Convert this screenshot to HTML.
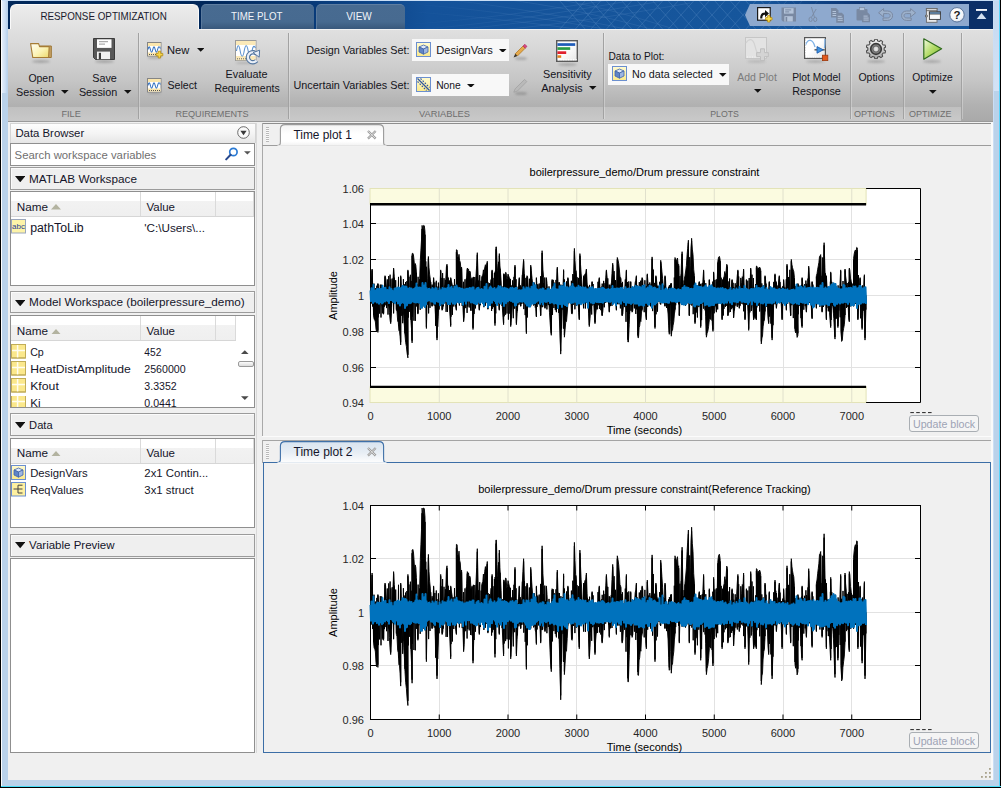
<!DOCTYPE html>
<html><head><meta charset="utf-8"><title>Response Optimization</title>
<style>
*{box-sizing:border-box;margin:0;padding:0}
html,body{width:1001px;height:788px;overflow:hidden;background:#bad2ea;font-family:"Liberation Sans",sans-serif;font-size:12px;color:#000}
#win{position:absolute;left:0;top:0;width:1001px;height:788px;background:#bad2ea;overflow:hidden}
.abs{position:absolute}
#edgeL{left:0;top:0;width:2px;height:788px;background:linear-gradient(90deg,#000 0,#000 1px,#fdfdfd 1px,#fdfdfd 2px)}
#edgeB{left:1px;top:786px;width:1000px;height:2px;background:linear-gradient(180deg,#45dcf6 0,#45dcf6 1px,#000 1px,#000 2px)}
#edgeR{left:999px;top:0;width:2px;height:788px;background:linear-gradient(90deg,#5ad4fa 0,#5ad4fa 1px,#000 1px,#000 2px)}
#edgeR2{left:993px;top:1px;width:1.2px;height:779px;background:#cbdef5}
#edgeT{left:0;top:0;width:1001px;height:1px;background:#c9def5}
#hdr{left:8px;top:1px;width:985px;height:29px;background:linear-gradient(90deg,#00275a 0,#00275a 200px,#0a3f80 330px,#14529a 420px,#16569c 700px,#15549a 960px)}
#hdrR{left:969px;top:1px;width:24px;height:29px;background:#0b2f67}
.tab{position:absolute;top:4px;height:25px;border-radius:5px 5px 0 0;text-align:center;font-size:12px;line-height:25px;color:#eef2f7;background:linear-gradient(180deg,#486b91 0,#476a90 70%,#39587c 100%);border-top:1px solid #5f7ea1;border-left:1px solid #5b7a9d}
#tab1{left:10px;top:4px;width:189px;height:26px;background:linear-gradient(180deg,#ececec,#e0e0e0);color:#1c1c2c;border:1px solid #fafafa;border-bottom:none;border-radius:6px 6px 0 0}
#qa{left:745px;top:4px;width:224px;height:22px;background:#8ea9ce;clip-path:polygon(5px 0,100% 0,100% 100%,5px 100%,0 50%)}
#ribbon{left:8px;top:29px;width:985px;height:93px;background:linear-gradient(180deg,#e0e0e0 0,#d8d8d8 20%,#c5c5c5 56%,#b1b1b1 82%,#a9a9a9 100%)}
#rlabel{left:8px;top:107px;width:953px;height:14px;background:linear-gradient(180deg,#c0c0c0,#c9c9c9)}
#rline{left:8px;top:121px;width:985px;height:1px;background:#9a9a9a}
.sep{position:absolute;top:33px;width:1px;height:86px;background:#a2a2a2;box-shadow:1px 0 0 rgba(255,255,255,.28)}
.slab{position:absolute;top:107px;height:14px;line-height:14px;font-size:11px;color:#6b6b6b;text-align:center}
.t{position:absolute;white-space:nowrap}
.rt{position:absolute;font-size:12px;line-height:14px;color:#111;text-align:center;white-space:nowrap}
.dis{color:#8a8a8a}
.arr{display:inline-block;width:0;height:0;border-left:4px solid transparent;border-right:4px solid transparent;border-top:4px solid #111;vertical-align:middle;margin-left:5px;position:relative;top:-1px}
.combo{position:absolute;background:#f8f8f8;height:22px;font-size:12px;line-height:22px;white-space:nowrap}
#main{left:8px;top:122px;width:985px;height:658px;background:#f0f0f0}
.hd{position:absolute;left:10px;width:245px;background:linear-gradient(180deg,#f6f6f6,#ececec);border:1px solid #9c9c9c;font-size:12.5px;line-height:20px;color:#111;white-space:nowrap}
.tbl{position:absolute;left:10px;width:245px;background:#fff;border:1px solid #8e8e8e}
.th{position:absolute;top:1px;height:24px;background:linear-gradient(180deg,#fff 0,#fff 30%,#f1f1f1 31%,#ededed 100%);border-right:1px solid #d5d5d5;border-bottom:1px solid #d9d9d9;font-size:12.5px;line-height:29px;padding-left:5px;color:#111}
.row{position:absolute;left:0;height:17px;line-height:17px;font-size:12.5px;white-space:nowrap;color:#111}
.ic{position:absolute;left:0;top:0;width:16px;height:16px}
.tri{display:inline-block;width:0;height:0;border-left:5px solid transparent;border-right:5px solid transparent;border-top:6px solid #111;margin:0 5px 1px 4px}
.sorta{display:inline-block;width:0;height:0;border-left:4px solid transparent;border-right:4px solid transparent;border-bottom:5px solid #b1b19e;margin-left:4px;position:relative;top:-1px}
.ptab{position:absolute;height:21px;background:#f3f3f3;border:1px solid #8c9fb8;border-bottom:none;border-radius:5px 5px 0 0;font-size:12.5px;line-height:20px;padding-left:11px;color:#111;white-space:nowrap}
.pframe{position:absolute;left:263px;width:728px;border:1px solid #3a6ea5;background:#f0f0f0}
.ub{position:absolute;left:909px;width:70px;height:17px;border:1px solid #a3a3a3;border-radius:3px;background:#f5f5f5;color:#9b9b9b;font-size:12px;line-height:15px;text-align:center;white-space:nowrap}
.grip{position:absolute;left:257px;width:5px;height:17px;background:repeating-linear-gradient(180deg,#b5b5b5 0,#b5b5b5 1px,transparent 1px,transparent 2px)}
</style></head><body>
<div id="win">
<div class="abs" id="edgeT"></div>
<div class="abs" id="hdr"></div>
<div class="abs" id="hdrR"></div>
<svg class="abs" style="left:400px;top:1px" width="570" height="28" viewBox="0 0 570 28"><defs><linearGradient id="lf" x1="0" y1="0" x2="1" y2="0"><stop offset="0" stop-color="#fff" stop-opacity="0"/><stop offset="0.25" stop-color="#fff" stop-opacity="1"/><stop offset="1" stop-color="#fff" stop-opacity="1"/></linearGradient><mask id="lm"><rect x="0" y="0" width="570" height="28" fill="url(#lf)"/></mask></defs><g mask="url(#lm)" stroke="#4a7fba" stroke-width="0.8" fill="none"><path d="M0,24 C60,20 130,12 215,-2 M0,30 C80,24 150,14 240,-2 M40,30 C110,24 170,16 262,0 M90,30 C150,24 200,18 290,2 M0,10 C60,14 120,20 190,30 M0,2 C80,8 150,18 215,30 M50,-1 C110,6 170,16 235,30 M110,-1 C160,6 200,14 258,30 M160,-1 C200,6 230,14 280,30" opacity="0.38"/><path d="M159.0,-1 L186.0,29 M186.0,-1 L159.0,29 M174.5,-1 L201.5,29 M201.5,-1 L174.5,29 M190.0,-1 L217.0,29 M217.0,-1 L190.0,29 M205.5,-1 L232.5,29 M232.5,-1 L205.5,29 M221.0,-1 L248.0,29 M248.0,-1 L221.0,29 M236.5,-1 L263.5,29 M263.5,-1 L236.5,29 M252.0,-1 L279.0,29 M279.0,-1 L252.0,29 M267.5,-1 L294.5,29 M294.5,-1 L267.5,29 M283.0,-1 L310.0,29 M310.0,-1 L283.0,29 M298.5,-1 L325.5,29 M325.5,-1 L298.5,29 M314.0,-1 L341.0,29 M341.0,-1 L314.0,29 M329.5,-1 L356.5,29 M356.5,-1 L329.5,29 M345.0,-1 L372.0,29 M372.0,-1 L345.0,29 M360.5,-1 L387.5,29 M387.5,-1 L360.5,29 M376.0,-1 L403.0,29 M403.0,-1 L376.0,29 M391.5,-1 L418.5,29 M418.5,-1 L391.5,29" opacity="0.6"/></g></svg>
<div class="tab" id="tab1"></div>
<div class="tab" style="left:201px;width:113px"></div>
<div class="tab" style="left:316px;width:89px"></div>
<div class="abs" style="left:760px;top:1px;width:209px;height:3px;background:linear-gradient(90deg,rgba(8,44,104,0) 0,rgba(8,44,104,.9) 55%,rgba(8,44,104,1) 100%)"></div>
<div class="abs" id="qa"></div>
<svg class="abs" style="left:756.8px;top:7.0px" width="16.5" height="16" viewBox="0 0 16.5 16"><rect x="0.6" y="0.6" width="12.6" height="12.6" fill="#fff" stroke="#1a1a1a" stroke-width="1.2"/><path d="M3.2,11.5 C3.2,7 5,5.4 8,5.4 L8,3 L12,6.6 L8,10.2 L8,7.8 C6,7.8 5.2,9 5.4,11.5 Z" fill="#111"/><path d="M10.6,8.6h2.4v2h2v2.4h-2v2h-2.4v-2h-2v-2.4h2z" fill="#f8dc4c" stroke="#b58c14" stroke-width="0.8"/></svg>
<svg class="abs" style="left:781.3px;top:7.2px" width="15.6" height="15" viewBox="0 0 15.6 15"><path d="M0.5,0.5 H15 V14.5 H2 L0.5,13 Z" fill="#7989a2"/><rect x="3" y="1.2" width="9.6" height="5.4" fill="#b3c3d9"/><rect x="4.2" y="2.4" width="6" height="1" fill="#7989a2"/><rect x="4.2" y="4.4" width="4" height="1" fill="#7989a2"/><rect x="3.4" y="9.2" width="8.4" height="5.3" fill="#b3c3d9"/><rect x="4.6" y="10" width="1.6" height="4.5" fill="#7989a2"/></svg>
<svg class="abs" style="left:807.6px;top:7.0px" width="10" height="15" viewBox="0 0 10 15"><path d="M3.4,0 L6.4,10 M8.2,2 L3.6,10" stroke="#7989a2" stroke-width="0.9" fill="none"/><ellipse cx="2.6" cy="12.4" rx="1.6" ry="2.2" fill="none" stroke="#7989a2" stroke-width="0.9"/><ellipse cx="7.2" cy="12.4" rx="1.6" ry="2.2" fill="none" stroke="#7989a2" stroke-width="0.9"/></svg>
<svg class="abs" style="left:830.8px;top:8.0px" width="13.5" height="15" viewBox="0 0 13.5 15"><path d="M0,0 h5.1 l2.4,2.4 v7.2 h-7.5 z" fill="#7989a2"/><path d="M1.5,3.5 h3.5 M1.5,5.5 h4.5 M1.5,7.5 h4.5" stroke="#b3c3d9" stroke-width="1"/><path d="M5.2,4.8 h5.6 l2.4,2.4 v7.6 h-8 z" fill="#7989a2"/><path d="M6.7,8.3 h4 M6.7,10.3 h5 M6.7,12.3 h5" stroke="#b3c3d9" stroke-width="1"/></svg>
<svg class="abs" style="left:855.6px;top:7.2px" width="14.6" height="15.4" viewBox="0 0 14.6 15.4"><rect x="0.5" y="2" width="11" height="11.5" rx="1" fill="#7989a2"/><rect x="3.4" y="0.4" width="5.2" height="3" fill="#b3c3d9" stroke="#7989a2" stroke-width="0.7"/><path d="M6,5.6 h5.8 l2.4,2.4 v7.2 h-8.2 z" fill="#7989a2"/><path d="M7.5,9.1 h4.2 M7.5,11.1 h5.2 M7.5,13.1 h5.2" stroke="#b3c3d9" stroke-width="1"/></svg>
<svg class="abs" style="left:877.8px;top:8.4px" width="15.2" height="13" viewBox="0 0 15.2 13"><path d="M0.6,4.8 L5.6,0.6 V3 H9.6 C13,3 14.6,5.2 14.6,7.6 C14.6,10.2 12.8,12.4 9.6,12.4 H5 V10 H9.6 C11.4,10 12.2,8.8 12.2,7.6 C12.2,6.4 11.4,5.6 9.6,5.6 H5.6 V9 Z" fill="#9db1cb" stroke="#7989a2" stroke-width="1" stroke-linejoin="round"/></svg>
<svg class="abs" style="left:901px;top:8.4px" width="15.2" height="13" viewBox="0 0 15.2 13"><g transform="translate(15.2,0) scale(-1,1)"><path d="M0.6,4.8 L5.6,0.6 V3 H9.6 C13,3 14.6,5.2 14.6,7.6 C14.6,10.2 12.8,12.4 9.6,12.4 H5 V10 H9.6 C11.4,10 12.2,8.8 12.2,7.6 C12.2,6.4 11.4,5.6 9.6,5.6 H5.6 V9 Z" fill="#9db1cb" stroke="#7989a2" stroke-width="1" stroke-linejoin="round"/></g></svg>
<svg class="abs" style="left:924.6px;top:7.5px" width="16.4" height="15" viewBox="0 0 16.4 15"><rect x="1.4" y="0.5" width="10.6" height="13.8" fill="#e9e9e9" stroke="#6a6a6a" stroke-width="0.9"/><rect x="1.4" y="0.5" width="10.6" height="2.2" fill="#d6d6d6" stroke="#6a6a6a" stroke-width="0.9"/><rect x="4.4" y="4" width="11" height="7.4" fill="#fbfbfb" stroke="#3c3c3c" stroke-width="0.9"/><rect x="4.4" y="4" width="11" height="2" fill="#79b2e8" stroke="#3c3c3c" stroke-width="0.9"/><rect x="0.5" y="7.2" width="2.2" height="1.6" fill="#ddd" stroke="#555" stroke-width="0.6"/></svg>
<svg class="abs" style="left:949.0px;top:7.2px" width="16" height="16" viewBox="0 0 16 16"><defs><radialGradient id="hg" cx="0.4" cy="0.3" r="0.8"><stop offset="0" stop-color="#fff"/><stop offset="0.7" stop-color="#f1f4f8"/><stop offset="1" stop-color="#c9d4e2"/></radialGradient></defs><circle cx="8" cy="7.8" r="7.2" fill="url(#hg)" stroke="#4e6a92" stroke-width="0.9"/><text x="8" y="12" text-anchor="middle" font-family="Liberation Sans, sans-serif" font-weight="bold" font-size="11.5" fill="#1b1b1b">?</text></svg>
<svg class="abs" style="left:976.0px;top:8.7px" width="11" height="10.5" viewBox="0 0 11 10.5"><rect x="0" y="0" width="11" height="1.9" fill="#f4f7fb"/><path d="M0.4,10.3 L5.5,4 L10.6,10.3 Z" fill="#d3e0f0"/></svg>
<div class="abs" id="ribbon"></div>
<div class="abs" style="left:199px;top:29px;width:794px;height:1px;background:#f2f2f2"></div>
<div class="abs" id="rlabel"></div>
<div class="abs" id="rline"></div>


<svg class="abs" style="left:61.4px;top:90.4px" width="7.6" height="3.8" viewBox="0 0 10 5"><path d="M0,0H10L5,5Z" fill="#111"/></svg>


<svg class="abs" style="left:124.1px;top:90.4px" width="7.5" height="3.8" viewBox="0 0 10 5"><path d="M0,0H10L5,5Z" fill="#111"/></svg>

<div class="sep" style="left:138.0px"></div>

<svg class="abs" style="left:196.5px;top:48.2px" width="7.4" height="3.8" viewBox="0 0 10 5"><path d="M0,0H10L5,5Z" fill="#111"/></svg>




<div class="sep" style="left:288.0px"></div>


<div class="combo" style="left:412px;top:39px;width:97px;height:22px"></div>
<div class="combo" style="left:412px;top:74px;width:97px;height:22px"></div>

<svg class="abs" style="left:499.3px;top:48.6px" width="7.5" height="3.8" viewBox="0 0 10 5"><path d="M0,0H10L5,5Z" fill="#111"/></svg>

<svg class="abs" style="left:467.2px;top:83.6px" width="7.6" height="3.8" viewBox="0 0 10 5"><path d="M0,0H10L5,5Z" fill="#111"/></svg>


<svg class="abs" style="left:589.3px;top:85.9px" width="7.5" height="3.8" viewBox="0 0 10 5"><path d="M0,0H10L5,5Z" fill="#111"/></svg>

<div class="sep" style="left:603.0px"></div>

<div class="combo" style="left:608px;top:64px;width:121px;height:21px"></div>

<svg class="abs" style="left:719.3px;top:73.2px" width="7.5" height="3.8" viewBox="0 0 10 5"><path d="M0,0H10L5,5Z" fill="#111"/></svg>

<svg class="abs" style="left:754.3px;top:89.0px" width="7.5" height="3.8" viewBox="0 0 10 5"><path d="M0,0H10L5,5Z" fill="#111"/></svg>



<div class="sep" style="left:849.5px"></div>


<div class="sep" style="left:903.0px"></div>

<svg class="abs" style="left:929.2px;top:89.9px" width="7.6" height="3.8" viewBox="0 0 10 5"><path d="M0,0H10L5,5Z" fill="#111"/></svg>

<div class="sep" style="left:961.0px"></div>
<div class="abs" style="left:32.1px;top:59.7px;width:18.0px;height:3.2px;border-radius:50%;background:rgba(60,60,60,0.28);filter:blur(1.2px)"></div><svg class="abs" style="left:30.1px;top:42.8px" width="22" height="15.5" viewBox="0 0 22 15.5"><defs><linearGradient id="fg" x1="0" y1="0" x2="1" y2="1"><stop offset="0" stop-color="#fffef4"/><stop offset="0.55" stop-color="#fbf3b4"/><stop offset="1" stop-color="#ecd86a"/></linearGradient></defs><path d="M9.5,3 H21.3 V14.5 H4 Z" fill="#c8a468" stroke="#9c7634" stroke-width="1"/><path d="M0.6,0.6 H8.6 L9.6,3.6 H19.2 L18.6,14.6 H2.8 Z" fill="url(#fg)" stroke="#a67c34" stroke-width="1.1" stroke-linejoin="round"/></svg>
<div class="abs" style="left:94.5px;top:59.9px;width:19.0px;height:3.2px;border-radius:50%;background:rgba(60,60,60,0.28);filter:blur(1.2px)"></div><svg class="abs" style="left:93.0px;top:38.0px" width="22" height="22" viewBox="0 0 22 22"><path d="M0.5,0.5 H21.5 V21.5 H2.5 L0.5,19.5 Z" fill="#585858" stroke="#3c3c3c" stroke-width="1"/><rect x="4" y="1.3" width="14.5" height="8.6" fill="#fff"/><rect x="6" y="3.2" width="9" height="1" fill="#9a9a9a"/><rect x="6" y="5.6" width="6" height="1" fill="#9a9a9a"/><rect x="4" y="13.6" width="13" height="7.6" fill="#f2f2f2"/><rect x="5.8" y="14.8" width="2.2" height="6.4" fill="#3c3c3c"/></svg>
<div class="abs" style="left:147.7px;top:56.4px;width:13.0px;height:2.2px;border-radius:50%;background:rgba(60,60,60,0.22);filter:blur(1.2px)"></div><svg class="abs" style="left:147.2px;top:42.2px" width="16.5" height="16.5" viewBox="0 0 16.5 16.5"><rect x="0.5" y="0.5" width="13.5" height="13.5" fill="#fff" stroke="#858585"/><rect x="1" y="1" width="12.5" height="3" fill="#fbe6ac"/><rect x="1" y="10.5" width="12.5" height="3" fill="#fbe6ac"/><path d="M1,7.5 C1.8,4 2.6,4 3.4,7.5 S5,11 5.8,7.5 S7.4,4 8.2,7.5 S9.8,11 10.6,7.5 S12.2,4 13.4,6.5" fill="none" stroke="#2f6fc0" stroke-width="1.1"/><path d="M2,12.5h1m1,0h1m1,0h1m1,0h1m1,0h1m1,0h1" stroke="#555" stroke-width="1"/><path d="M11.2,9.2h2.4v2.2h2.2v2.4h-2.2v2.2h-2.4v-2.2h-2.2v-2.4h2.2z" fill="#f7d646" stroke="#b38a16" stroke-width="0.8"/></svg>
<div class="abs" style="left:147.7px;top:91.7px;width:13.0px;height:2.2px;border-radius:50%;background:rgba(60,60,60,0.22);filter:blur(1.2px)"></div><svg class="abs" style="left:147.2px;top:77.5px" width="16.5" height="16.5" viewBox="0 0 16.5 16.5"><rect x="0.5" y="0.5" width="13.5" height="13.5" fill="#fff" stroke="#858585"/><rect x="1" y="1" width="12.5" height="3" fill="#fbe6ac"/><rect x="1" y="10.5" width="12.5" height="3" fill="#fbe6ac"/><path d="M1,7.5 C1.8,4 2.6,4 3.4,7.5 S5,11 5.8,7.5 S7.4,4 8.2,7.5 S9.8,11 10.6,7.5 S12.2,4 13.4,6.5" fill="none" stroke="#2f6fc0" stroke-width="1.1"/><path d="M2,12.5h1m1,0h1m1,0h1m1,0h1m1,0h1m1,0h1" stroke="#555" stroke-width="1"/></svg>
<div class="abs" style="left:236.2px;top:61.5px;width:18.0px;height:2.8px;border-radius:50%;background:rgba(60,60,60,0.20);filter:blur(1.2px)"></div><svg class="abs" style="left:235.2px;top:40.4px" width="26" height="25" viewBox="0 0 26 25"><rect x="0.5" y="0.5" width="20.5" height="20" fill="#fff" stroke="#9a9a9a"/><rect x="1" y="1" width="19.5" height="4" fill="#fbe9b8"/><rect x="1" y="16" width="19.5" height="4.2" fill="#fbe9b8"/><path d="M1.5,11 C2.6,4 4,4 5.2,11 S8,18 9.2,11 S12,4 13.2,11 S16,16 17,11 S19,5 20.5,8" fill="none" stroke="#5f94d0" stroke-width="1.1"/><path d="M2,18.8h1m1,0h1m1,0h1m1,0h1m1,0h1" stroke="#666" stroke-width="1"/><path d="M21.9,14.3 A5,5 0 1 0 21.6,20.6" fill="none" stroke="#54769f" stroke-width="4.4" stroke-linecap="butt"/><path d="M21.9,14.3 A5,5 0 1 0 21.6,20.6" fill="none" stroke="#e9eff8" stroke-width="2.2"/><path d="M18,12.6 L24.6,10.2 L24.2,17.2 Z" fill="#e9eff8" stroke="#54769f" stroke-width="1"/></svg>
<svg class="abs" style="left:416.0px;top:42.0px" width="15" height="15" viewBox="0 0 15 15"><defs><linearGradient id="yg4202" x1="0" y1="0" x2="0" y2="1"><stop offset="0" stop-color="#fffbd2"/><stop offset="1" stop-color="#fbe989"/></linearGradient></defs><rect x="0.5" y="0.5" width="14" height="14" fill="url(#yg4202)" stroke="#6b8fcf"/><path d="M3,5 L7.5,3 L12,5 L7.5,7 Z" fill="#dfe8f7" stroke="#3f63a8" stroke-width="0.8" stroke-linejoin="round"/><path d="M3,5 V10 L7.5,12.2 V7 Z" fill="#5f84c6" stroke="#3f63a8" stroke-width="0.8" stroke-linejoin="round"/><path d="M12,5 V10 L7.5,12.2 V7 Z" fill="#9db6e2" stroke="#3f63a8" stroke-width="0.8" stroke-linejoin="round"/></svg>
<svg class="abs" style="left:416.0px;top:77.0px" width="15" height="15" viewBox="0 0 15 15"><defs><linearGradient id="yp" x1="0" y1="0" x2="0" y2="1"><stop offset="0" stop-color="#fffbd2"/><stop offset="1" stop-color="#fbe989"/></linearGradient></defs><rect x="0.5" y="0.5" width="14" height="14" fill="url(#yp)" stroke="#6b8fcf"/><path d="M1.5,1.5 L13.5,13.5" stroke="#2f55a0" stroke-width="1.2"/><path d="M4.5,1.5 L13.5,10.5 M1.5,4.5 L10.5,13.5" stroke="#2f55a0" stroke-width="1.1" stroke-dasharray="1.6,1.4"/></svg>
<div class="abs" style="left:514.8px;top:57.4px;width:12.0px;height:2.4px;border-radius:50%;background:rgba(60,60,60,0.25);filter:blur(1.2px)"></div><svg class="abs" style="left:512.8px;top:43.4px" width="15" height="15" viewBox="0 0 15 15"><path d="M2.2,10.8 L10,3 L12.2,5.2 L4.4,13 Z" fill="#e6a94a" stroke="#b07a28" stroke-width="0.8"/><path d="M10,3 L11.8,1.2 L14,3.4 L12.2,5.2 Z" fill="#d8457e" stroke="#a82a5c" stroke-width="0.6"/><path d="M0.6,14.4 L2.2,10.8 L4.4,13 Z" fill="#3a3226"/></svg>
<div class="abs" style="left:514.8px;top:92.4px;width:12.0px;height:2.4px;border-radius:50%;background:rgba(60,60,60,0.25);filter:blur(1.2px)"></div><svg class="abs" style="left:512.8px;top:78.4px" width="15" height="15" viewBox="0 0 15 15"><path d="M0.8,14.2 L2.2,10.8 L11.6,1.4 L13.8,3.6 L4.4,13 Z" fill="#b9b9b9" stroke="#a2a2a2" stroke-width="0.8"/></svg>
<div class="abs" style="left:557.5px;top:62.5px;width:19.0px;height:3.0px;border-radius:50%;background:rgba(60,60,60,0.25);filter:blur(1.2px)"></div><svg class="abs" style="left:556.0px;top:40.0px" width="22" height="22" viewBox="0 0 22 22"><defs><linearGradient id="sg" x1="0" y1="0" x2="1" y2="1"><stop offset="0.4" stop-color="#fff"/><stop offset="1" stop-color="#e6e6e6"/></linearGradient></defs><rect x="0.7" y="0.7" width="20.6" height="20.6" fill="url(#sg)" stroke="#5a5a5a" stroke-width="1.4"/><rect x="1.4" y="3.2" width="17.8" height="2.7" fill="#1f5cb8"/><rect x="1.4" y="7.2" width="12.8" height="2.7" fill="#2b9b45"/><rect x="1.4" y="11.3" width="8.8" height="2.7" fill="#e0202e"/><rect x="1.4" y="15.3" width="3.8" height="2.5" fill="#e2811c"/><path d="M2,19.6h1.2m1.3,0h1.2m1.3,0h1.2m1.3,0h1.2m1.3,0h1.2m1.3,0h1.2m1.3,0h1.2m1.3,0h1.2" stroke="#fff" stroke-width="1.4"/></svg>
<svg class="abs" style="left:612.0px;top:66.0px" width="15" height="15" viewBox="0 0 15 15"><defs><linearGradient id="yg6186" x1="0" y1="0" x2="0" y2="1"><stop offset="0" stop-color="#fffbd2"/><stop offset="1" stop-color="#fbe989"/></linearGradient></defs><rect x="0.5" y="0.5" width="14" height="14" fill="url(#yg6186)" stroke="#6b8fcf"/><path d="M3,5 L7.5,3 L12,5 L7.5,7 Z" fill="#dfe8f7" stroke="#3f63a8" stroke-width="0.8" stroke-linejoin="round"/><path d="M3,5 V10 L7.5,12.2 V7 Z" fill="#5f84c6" stroke="#3f63a8" stroke-width="0.8" stroke-linejoin="round"/><path d="M12,5 V10 L7.5,12.2 V7 Z" fill="#9db6e2" stroke="#3f63a8" stroke-width="0.8" stroke-linejoin="round"/></svg>
<div class="abs" style="left:746.5px;top:60.0px;width:19.0px;height:3.0px;border-radius:50%;background:rgba(60,60,60,0.15);filter:blur(1.2px)"></div><svg class="abs" style="left:745.0px;top:37.0px" width="24" height="24" viewBox="0 0 24 24"><rect x="0.5" y="0.5" width="21" height="21" fill="#e3e3e3" stroke="#c6c6c6"/><path d="M1,6 C4,1 8,1 10,9 S13,17 15,17" fill="none" stroke="#d2d2d2" stroke-width="1.2"/><path d="M2,20h1m1.5,0h1m1.5,0h1m1.5,0h1" stroke="#f4f4f4" stroke-width="1.2"/><path d="M15.5,11.8h4v3.8h3.9v4h-3.9v3.9h-4v-3.9h-3.9v-4h3.9z" fill="#d4d4d4" stroke="#bcbcbc" stroke-width="0.9"/></svg>
<div class="abs" style="left:805.5px;top:60.0px;width:19.0px;height:3.0px;border-radius:50%;background:rgba(60,60,60,0.22);filter:blur(1.2px)"></div><svg class="abs" style="left:804.0px;top:37.0px" width="25" height="25" viewBox="0 0 25 25"><defs><linearGradient id="pg" x1="0" y1="0" x2="1" y2="1"><stop offset="0.45" stop-color="#fff"/><stop offset="1" stop-color="#e2e2e2"/></linearGradient></defs><rect x="0.6" y="0.6" width="20.8" height="20.8" fill="url(#pg)" stroke="#565656" stroke-width="1.2"/><path d="M1.5,8 C4,1 9,2 11,10 M20.5,11 C21,8 21,5 21,2" fill="none" stroke="#7fb2e6" stroke-width="1.3"/><path d="M2,19.8h1m1.3,0h1m1.3,0h1m1.3,0h1m1.3,0h1m1.3,0h1m1.3,0h1 M1.6,4v1m0,1.5v1m0,1.5v1m0,1.5v1m0,1.5v1m0,1.5v1" stroke="#fff" stroke-width="1.2"/><path d="M10.5,12.8 H20.8" stroke="#666" stroke-width="1.6"/><path d="M13,9.6 L19.2,12.8 L13,16.2 Z" fill="#3f92e0" stroke="#1f5fae" stroke-width="0.9" stroke-linejoin="round"/><rect x="18.4" y="18.2" width="5.4" height="5.4" fill="#e25a1c" stroke="#9e3a10" stroke-width="0.8"/></svg>
<div class="abs" style="left:867.0px;top:60.2px;width:18.0px;height:3.2px;border-radius:50%;background:rgba(60,60,60,0.25);filter:blur(1.2px)"></div><svg class="abs" style="left:866.0px;top:38.8px" width="20" height="20" viewBox="0 0 20 20"><defs><linearGradient id="gg" x1="0" y1="0" x2="0" y2="1"><stop offset="0" stop-color="#f6f6f6"/><stop offset="1" stop-color="#a8a8a8"/></linearGradient></defs><polygon points="18.15,10.93 19.69,12.01 19.02,14.07 17.14,14.03 16.04,15.54 16.66,17.32 14.90,18.60 13.41,17.46 11.63,18.04 11.09,19.84 8.91,19.84 8.37,18.04 6.59,17.46 5.10,18.60 3.34,17.32 3.96,15.54 2.86,14.03 0.98,14.07 0.31,12.01 1.85,10.93 1.85,9.07 0.31,7.99 0.98,5.93 2.86,5.97 3.96,4.46 3.34,2.68 5.10,1.40 6.59,2.54 8.37,1.96 8.91,0.16 11.09,0.16 11.63,1.96 13.41,2.54 14.90,1.40 16.66,2.68 16.04,4.46 17.14,5.97 19.02,5.93 19.69,7.99 18.15,9.07" fill="url(#gg)" stroke="#4c4c4c" stroke-width="1.1" stroke-linejoin="round"/><circle cx="10" cy="10" r="5.3" fill="#8a8a8a" stroke="#3a3a3a" stroke-width="1.7"/><circle cx="10" cy="10" r="3.2" fill="#b9b9b9" stroke="#555" stroke-width="0.9"/><circle cx="10" cy="10" r="1.9" fill="#e4e4e4"/></svg>
<div class="abs" style="left:923.1px;top:59.9px;width:18.0px;height:3.2px;border-radius:50%;background:rgba(60,60,60,0.25);filter:blur(1.2px)"></div><svg class="abs" style="left:922.6px;top:38.0px" width="20" height="22" viewBox="0 0 20 22"><defs><linearGradient id="plg" x1="0" y1="0" x2="1" y2="0.9"><stop offset="0" stop-color="#f4fbe4"/><stop offset="0.5" stop-color="#b5dc6a"/><stop offset="1" stop-color="#7dbb2e"/></linearGradient></defs><path d="M0.8,0.8 L18.6,10.8 L0.8,21.2 Z" fill="url(#plg)" stroke="#2f6a1c" stroke-width="1.2" stroke-linejoin="round"/></svg>
<div class="abs" id="main"></div>
<div class="abs" style="left:10px;top:123px;width:246px;height:20px;background:linear-gradient(180deg,#fdfdfd 0,#f4f4f4 50%,#e6e6e6 100%);border:1px solid #d4d4d4;border-bottom:none"></div>
<svg class="abs" style="left:236.5px;top:125.5px" width="13" height="13" viewBox="0 0 13 13"><circle cx="6.5" cy="6.5" r="5.8" fill="#fafafa" stroke="#5a5a5a" stroke-width="0.9"/><path d="M3.4,4.8 H9.6 L6.5,9.2 Z" fill="#3a3a3a"/></svg>
<div class="abs" style="left:10px;top:142.6px;width:245px;height:23px;background:#fff;border:1px solid #8f8f8f"></div>
<svg class="abs" style="left:224.5px;top:146.5px" width="14" height="14" viewBox="0 0 14 14"><circle cx="8.4" cy="5" r="3.7" fill="#fff" stroke="#2a7ad4" stroke-width="1.7"/><path d="M5.6,7.8 L1.2,12.4" stroke="#27488e" stroke-width="2" stroke-linecap="round"/></svg>
<svg class="abs" style="left:244.0px;top:151.0px" width="6.8" height="3.8" viewBox="0 0 10 5"><path d="M0,0H10L5,5Z" fill="#555"/></svg>
<div class="abs" style="left:10px;top:167.2px;width:244.5px;height:22.4px;background:#efefef;border:1px solid #9b9b9b;box-shadow:inset 1px 1px 0 #fbfbfb"></div>
<svg class="abs" style="left:14.6px;top:175.9px" width="10.4" height="6.4" viewBox="0 0 10 6"><path d="M0,0H10L5,6Z" fill="#111"/></svg>
<div class="abs" style="left:10px;top:191.0px;width:245px;height:94.6px;background:#fff;border:1px solid #8f8f8f;overflow:hidden"></div>
<div class="abs" style="left:11px;top:192.0px;width:242.5px;height:25px;background:linear-gradient(180deg,#fff 0,#fff 36%,#f2f2f2 37%,#efefef 100%);border-bottom:1px solid #d6d6d6"></div>
<div class="abs" style="left:140.0px;top:192.0px;width:1px;height:24px;background:#dadada"></div>
<div class="abs" style="left:214.6px;top:192.0px;width:1px;height:24px;background:#dadada"></div>
<div class="abs" style="left:252.5px;top:192.0px;width:1px;height:24px;background:#dadada"></div>
<svg class="abs" style="left:51.2px;top:204.2px" width="10" height="5.6" viewBox="0 0 10 5.6"><path d="M0,5.6H10L5,0Z" fill="#b3b3a0"/></svg>
<svg class="abs" style="left:11.3px;top:219.3px" width="15" height="15" viewBox="0 0 15 15"><rect x="0.5" y="0.5" width="14" height="13.5" fill="#fdf3a8" stroke="#9aa6bc"/><text x="7.5" y="10.4" text-anchor="middle" font-family="Liberation Sans, sans-serif" font-size="8" fill="#2a3f94">abc</text></svg>
<div class="abs" style="left:10px;top:290.8px;width:244.5px;height:22.5px;background:#efefef;border:1px solid #9b9b9b;box-shadow:inset 1px 1px 0 #fbfbfb"></div>
<svg class="abs" style="left:14.6px;top:299.5px" width="10.4" height="6.4" viewBox="0 0 10 6"><path d="M0,0H10L5,6Z" fill="#111"/></svg>
<div class="abs" style="left:10px;top:315.4px;width:245px;height:92.2px;background:#fff;border:1px solid #8f8f8f;overflow:hidden"></div>
<div class="abs" style="left:11px;top:316.4px;width:224.5px;height:25px;background:linear-gradient(180deg,#fff 0,#fff 36%,#f2f2f2 37%,#efefef 100%);border-bottom:1px solid #d6d6d6"></div>
<div class="abs" style="left:140.0px;top:316.4px;width:1px;height:24px;background:#dadada"></div>
<div class="abs" style="left:214.6px;top:316.4px;width:1px;height:24px;background:#dadada"></div>
<div class="abs" style="left:234.5px;top:316.4px;width:1px;height:24px;background:#dadada"></div>
<svg class="abs" style="left:51.2px;top:328.6px" width="10" height="5.6" viewBox="0 0 10 5.6"><path d="M0,5.6H10L5,0Z" fill="#b3b3a0"/></svg>
<div class="abs" style="left:11px;top:342px;width:226px;height:64.6px;overflow:hidden" id="mwclip"></div>
<svg class="abs" style="left:11.3px;top:343.5px" width="15" height="15" viewBox="0 0 15 15"><rect x="0.5" y="0.5" width="14" height="13.5" fill="#fbe88c" stroke="#b9a550"/><path d="M6.6,0.5V14M0.5,6.6H14.5" stroke="#fffdf0" stroke-width="1.5"/><path d="M0.5,0.5H14.5V14H0.5Z" fill="none" stroke="#c1ad58"/></svg>
<svg class="abs" style="left:11.3px;top:360.5px" width="15" height="15" viewBox="0 0 15 15"><rect x="0.5" y="0.5" width="14" height="13.5" fill="#fbe88c" stroke="#b9a550"/><path d="M6.6,0.5V14M0.5,6.6H14.5" stroke="#fffdf0" stroke-width="1.5"/><path d="M0.5,0.5H14.5V14H0.5Z" fill="none" stroke="#c1ad58"/></svg>
<svg class="abs" style="left:11.3px;top:377.5px" width="15" height="15" viewBox="0 0 15 15"><rect x="0.5" y="0.5" width="14" height="13.5" fill="#fbe88c" stroke="#b9a550"/><path d="M6.6,0.5V14M0.5,6.6H14.5" stroke="#fffdf0" stroke-width="1.5"/><path d="M0.5,0.5H14.5V14H0.5Z" fill="none" stroke="#c1ad58"/></svg>
<div class="abs" style="left:11px;top:396px;width:226px;height:11px;overflow:hidden"><svg class="abs" style="left:0.3px;top:-1.4px" width="15" height="15" viewBox="0 0 15 15"><rect x="0.5" y="0.5" width="14" height="13.5" fill="#fbe88c" stroke="#b9a550"/><path d="M6.6,0.5V14M0.5,6.6H14.5" stroke="#fffdf0" stroke-width="1.5"/><path d="M0.5,0.5H14.5V14H0.5Z" fill="none" stroke="#c1ad58"/></svg><svg class="abs" style="left:0;top:0" width="226" height="11" font-family="Liberation Sans, sans-serif"><text x="19.2" y="10.8" font-size="11.6" fill="#15152a">Ki</text><text x="133.3" y="10.8" font-size="11.6" fill="#15152a" textLength="32.4" lengthAdjust="spacingAndGlyphs">0.0441</text></svg></div>
<div class="abs" style="left:236.5px;top:342px;width:17.5px;height:65px;background:#fff"></div>
<svg class="abs" style="left:241.4px;top:349.6px" width="7.6" height="4.2" viewBox="0 0 10 5"><path d="M0,5H10L5,0Z" fill="#4a4a4a"/></svg>
<svg class="abs" style="left:241.4px;top:396.4px" width="7.6" height="4.2" viewBox="0 0 10 5"><path d="M0,0H10L5,5Z" fill="#4a4a4a"/></svg>
<div class="abs" style="left:238px;top:361px;width:15.6px;height:6px;background:linear-gradient(180deg,#fcfcfc,#dcdcdc);border:1px solid #9a9a9a;border-radius:2px"></div>
<div class="abs" style="left:10px;top:413.0px;width:244.5px;height:22.6px;background:#efefef;border:1px solid #9b9b9b;box-shadow:inset 1px 1px 0 #fbfbfb"></div>
<svg class="abs" style="left:14.6px;top:421.7px" width="10.4" height="6.4" viewBox="0 0 10 6"><path d="M0,0H10L5,6Z" fill="#111"/></svg>
<div class="abs" style="left:10px;top:437.6px;width:245px;height:90.8px;background:#fff;border:1px solid #8f8f8f;overflow:hidden"></div>
<div class="abs" style="left:11px;top:438.6px;width:242.5px;height:25px;background:linear-gradient(180deg,#fff 0,#fff 36%,#f2f2f2 37%,#efefef 100%);border-bottom:1px solid #d6d6d6"></div>
<div class="abs" style="left:140.0px;top:438.6px;width:1px;height:24px;background:#dadada"></div>
<div class="abs" style="left:214.6px;top:438.6px;width:1px;height:24px;background:#dadada"></div>
<div class="abs" style="left:252.5px;top:438.6px;width:1px;height:24px;background:#dadada"></div>
<svg class="abs" style="left:51.2px;top:450.8px" width="10" height="5.6" viewBox="0 0 10 5.6"><path d="M0,5.6H10L5,0Z" fill="#b3b3a0"/></svg>
<svg class="abs" style="left:11.3px;top:464.7px" width="15" height="15" viewBox="0 0 15 15"><defs><linearGradient id="yg577" x1="0" y1="0" x2="0" y2="1"><stop offset="0" stop-color="#fffbd2"/><stop offset="1" stop-color="#fbe989"/></linearGradient></defs><rect x="0.5" y="0.5" width="14" height="14" fill="url(#yg577)" stroke="#6b8fcf"/><path d="M3,5 L7.5,3 L12,5 L7.5,7 Z" fill="#dfe8f7" stroke="#3f63a8" stroke-width="0.8" stroke-linejoin="round"/><path d="M3,5 V10 L7.5,12.2 V7 Z" fill="#5f84c6" stroke="#3f63a8" stroke-width="0.8" stroke-linejoin="round"/><path d="M12,5 V10 L7.5,12.2 V7 Z" fill="#9db6e2" stroke="#3f63a8" stroke-width="0.8" stroke-linejoin="round"/></svg>
<svg class="abs" style="left:11.3px;top:482.0px" width="15" height="15" viewBox="0 0 15 15"><rect x="0.5" y="0.5" width="14" height="13.5" fill="#fdf0a0" stroke="#6b8fcf"/><path d="M2.5,7H7 M7,3.2V11 M7,3.2H11.5 M7,7H11.5 M7,11H11.5" stroke="#444" stroke-width="1" fill="none"/></svg>
<div class="abs" style="left:10px;top:533.6px;width:244.5px;height:23.4px;background:#efefef;border:1px solid #9b9b9b;box-shadow:inset 1px 1px 0 #fbfbfb"></div>
<svg class="abs" style="left:14.6px;top:542.3px" width="10.4" height="6.4" viewBox="0 0 10 6"><path d="M0,0H10L5,6Z" fill="#111"/></svg>
<div class="abs" style="left:10px;top:558px;width:245px;height:195px;background:#fff;border:1px solid #8f8f8f"></div>
<div class="abs" style="left:255.5px;top:123px;width:1px;height:630px;background:#d9d9d9"></div>
<div class="abs" style="left:262px;top:123px;width:729px;height:1px;background:#8e8e8e"></div>
<div class="abs" style="left:262px;top:123px;width:1px;height:314px;background:#a9a9a9"></div>
<div class="abs" style="left:262px;top:144.6px;width:729px;height:1.2px;background:#9c9c9c"></div>
<div class="abs" style="left:262px;top:436px;width:729px;height:1.2px;background:#fbfbfb"></div>
<div class="abs" style="left:991px;top:122px;width:2px;height:658px;background:#fafafa"></div>
<div class="abs" style="left:262px;top:440px;width:729px;height:1px;background:#a4a4a4"></div>
<div class="abs" style="left:262px;top:440px;width:1px;height:23px;background:#a9a9a9"></div>
<div class="abs" style="left:262.6px;top:462px;width:728.4px;height:291px;border:1.2px solid #3c6ea6"></div>
<svg class="abs" style="left:277px;top:124.2px" width="111" height="23" viewBox="0 0 111 23"><defs><linearGradient id="tga" x1="0" y1="0" x2="0" y2="1"><stop offset="0" stop-color="#d9e4ef"/><stop offset="0.5" stop-color="#e6edf4"/><stop offset="1" stop-color="#fdfdfd"/></linearGradient><linearGradient id="tgi" x1="0" y1="0" x2="0" y2="1"><stop offset="0" stop-color="#f3f3f3"/><stop offset="0.45" stop-color="#fff"/><stop offset="0.8" stop-color="#fff"/><stop offset="1" stop-color="#f2f2f2"/></linearGradient></defs><path d="M0,21.5 C3,21.5 3.4,20.5 3.4,17.5 V5 C3.4,2 5,0.6 8,0.6 H102 C105,0.6 106.6,2 106.6,5 V17.5 C106.6,20.5 107,21.5 110,21.5" fill="url(#tgi)" stroke="#9a9a9a" stroke-width="1.1"/><path d="M0.5,21.9 H109.5" stroke="#f1f1f1" stroke-width="1.4"/></svg>
<div class="abs" style="left:266px;top:126.8px;width:3.2px;height:15px;background:repeating-linear-gradient(180deg,#b9b9b9 0,#b9b9b9 1px,rgba(255,255,255,.6) 1px,rgba(255,255,255,.6) 2px)"></div>
<svg class="abs" style="left:367.4px;top:130.4px" width="9.6" height="9.6" viewBox="0 0 10 10"><path d="M1,1L9,9M9,1L1,9" stroke="#9d9d9d" stroke-width="2.4"/><path d="M1.3,1.3L8.7,8.7M8.700,1.3L1.3,8.7" stroke="#f4f4f4" stroke-width="0.7"/></svg>
<svg class="abs" style="left:277px;top:441.0px" width="111" height="23" viewBox="0 0 111 23"><defs><linearGradient id="tga" x1="0" y1="0" x2="0" y2="1"><stop offset="0" stop-color="#d9e4ef"/><stop offset="0.5" stop-color="#e6edf4"/><stop offset="1" stop-color="#fdfdfd"/></linearGradient><linearGradient id="tgi" x1="0" y1="0" x2="0" y2="1"><stop offset="0" stop-color="#f3f3f3"/><stop offset="0.45" stop-color="#fff"/><stop offset="0.8" stop-color="#fff"/><stop offset="1" stop-color="#f2f2f2"/></linearGradient></defs><path d="M0,21.5 C3,21.5 3.4,20.5 3.4,17.5 V5 C3.4,2 5,0.6 8,0.6 H102 C105,0.6 106.6,2 106.6,5 V17.5 C106.6,20.5 107,21.5 110,21.5" fill="url(#tga)" stroke="#3f70a8" stroke-width="1.1"/><path d="M0.5,21.9 H109.5" stroke="#fdfdfd" stroke-width="1.4"/></svg>
<div class="abs" style="left:266px;top:443.6px;width:3.2px;height:15px;background:repeating-linear-gradient(180deg,#b9b9b9 0,#b9b9b9 1px,rgba(255,255,255,.6) 1px,rgba(255,255,255,.6) 2px)"></div>
<svg class="abs" style="left:367.4px;top:447.2px" width="9.6" height="9.6" viewBox="0 0 10 10"><path d="M1,1L9,9M9,1L1,9" stroke="#9d9d9d" stroke-width="2.4"/><path d="M1.3,1.3L8.7,8.7M8.700,1.3L1.3,8.7" stroke="#f4f4f4" stroke-width="0.7"/></svg>
<div class="abs" style="left:909px;top:415.2px;width:70px;height:16.6px;border:1px solid #a9aeb3;border-radius:3px;background:#f4f4f4"></div>
<div class="abs" style="left:909px;top:732.2px;width:70px;height:16.6px;border:1px solid #a9aeb3;border-radius:3px;background:#f4f4f4"></div>
<svg class="abs" style="left:980.6px;top:768px" width="11" height="11" viewBox="0 0 11 11"><rect x="8" y="0" width="1.8" height="1.8" fill="#a9a28c"/><rect x="4" y="4" width="1.8" height="1.8" fill="#a9a28c"/><rect x="8" y="4" width="1.8" height="1.8" fill="#a9a28c"/><rect x="0" y="8" width="1.8" height="1.8" fill="#a9a28c"/><rect x="4" y="8" width="1.8" height="1.8" fill="#a9a28c"/><rect x="8" y="8" width="1.8" height="1.8" fill="#a9a28c"/></svg>
<svg class="abs" style="left:0;top:0" width="1001" height="788" viewBox="0 0 1001 788">
<rect x="370.5" y="188.5" width="550.0" height="214.0" fill="#fff"/>
<line x1="439.50" y1="188.5" x2="439.50" y2="402.5" stroke="#e2e2e2" stroke-width="1"/>
<line x1="508.50" y1="188.5" x2="508.50" y2="402.5" stroke="#e2e2e2" stroke-width="1"/>
<line x1="576.50" y1="188.5" x2="576.50" y2="402.5" stroke="#e2e2e2" stroke-width="1"/>
<line x1="645.50" y1="188.5" x2="645.50" y2="402.5" stroke="#e2e2e2" stroke-width="1"/>
<line x1="714.50" y1="188.5" x2="714.50" y2="402.5" stroke="#e2e2e2" stroke-width="1"/>
<line x1="783.50" y1="188.5" x2="783.50" y2="402.5" stroke="#e2e2e2" stroke-width="1"/>
<line x1="851.50" y1="188.5" x2="851.50" y2="402.5" stroke="#e2e2e2" stroke-width="1"/>
<line x1="370.5" y1="223.5" x2="920.5" y2="223.5" stroke="#e2e2e2" stroke-width="1"/>
<line x1="370.5" y1="259.5" x2="920.5" y2="259.5" stroke="#e2e2e2" stroke-width="1"/>
<line x1="370.5" y1="295.5" x2="920.5" y2="295.5" stroke="#e2e2e2" stroke-width="1"/>
<line x1="370.5" y1="331.5" x2="920.5" y2="331.5" stroke="#e2e2e2" stroke-width="1"/>
<line x1="370.5" y1="367.5" x2="920.5" y2="367.5" stroke="#e2e2e2" stroke-width="1"/>
<rect x="370.0" y="188.5" width="496.1" height="15.7" fill="#fbfbe0" stroke="#e3e3b8" stroke-width="1"/>
<rect x="370.0" y="386.9" width="496.1" height="15.6" fill="#fbfbe0" stroke="#e3e3b8" stroke-width="1"/>
<line x1="439.25" y1="188.5" x2="439.25" y2="204.2" stroke="#e0e0cc" stroke-width="1"/>
<line x1="439.25" y1="386.9" x2="439.25" y2="402.5" stroke="#e0e0cc" stroke-width="1"/>
<line x1="508.00" y1="188.5" x2="508.00" y2="204.2" stroke="#e0e0cc" stroke-width="1"/>
<line x1="508.00" y1="386.9" x2="508.00" y2="402.5" stroke="#e0e0cc" stroke-width="1"/>
<line x1="576.75" y1="188.5" x2="576.75" y2="204.2" stroke="#e0e0cc" stroke-width="1"/>
<line x1="576.75" y1="386.9" x2="576.75" y2="402.5" stroke="#e0e0cc" stroke-width="1"/>
<line x1="645.50" y1="188.5" x2="645.50" y2="204.2" stroke="#e0e0cc" stroke-width="1"/>
<line x1="645.50" y1="386.9" x2="645.50" y2="402.5" stroke="#e0e0cc" stroke-width="1"/>
<line x1="714.25" y1="188.5" x2="714.25" y2="204.2" stroke="#e0e0cc" stroke-width="1"/>
<line x1="714.25" y1="386.9" x2="714.25" y2="402.5" stroke="#e0e0cc" stroke-width="1"/>
<line x1="783.00" y1="188.5" x2="783.00" y2="204.2" stroke="#e0e0cc" stroke-width="1"/>
<line x1="783.00" y1="386.9" x2="783.00" y2="402.5" stroke="#e0e0cc" stroke-width="1"/>
<line x1="851.75" y1="188.5" x2="851.75" y2="204.2" stroke="#e0e0cc" stroke-width="1"/>
<line x1="851.75" y1="386.9" x2="851.75" y2="402.5" stroke="#e0e0cc" stroke-width="1"/>
<path d="M370.5,204.2 V386.9" stroke="#000" stroke-width="1" fill="none"/>
<path d="M866.1,188.5 H920.5 V402.5 H866.1" stroke="#000" stroke-width="1" fill="none"/>
<line x1="370.5" y1="223.5" x2="376.0" y2="223.5" stroke="#000"/>
<line x1="920.5" y1="223.5" x2="915.0" y2="223.5" stroke="#000"/>
<line x1="370.5" y1="259.5" x2="376.0" y2="259.5" stroke="#000"/>
<line x1="920.5" y1="259.5" x2="915.0" y2="259.5" stroke="#000"/>
<line x1="370.5" y1="295.5" x2="376.0" y2="295.5" stroke="#000"/>
<line x1="920.5" y1="295.5" x2="915.0" y2="295.5" stroke="#000"/>
<line x1="370.5" y1="331.5" x2="376.0" y2="331.5" stroke="#000"/>
<line x1="920.5" y1="331.5" x2="915.0" y2="331.5" stroke="#000"/>
<line x1="370.5" y1="367.5" x2="376.0" y2="367.5" stroke="#000"/>
<line x1="920.5" y1="367.5" x2="915.0" y2="367.5" stroke="#000"/>
<path d="M370.5,291.9L371.3,282.7L372.1,269.0L372.9,292.1L373.6,316.0L374.2,319.5L374.8,319.8L375.4,322.0L376.0,329.1L376.6,331.9L377.2,327.1L377.9,332.4L377.9,283.4L378.5,288.9L379.1,292.5L379.8,289.4L380.4,297.3L381.0,297.6L381.7,304.1L382.3,306.1L382.9,313.7L383.6,314.1L384.3,293.8L385.0,275.7L385.6,277.9L386.3,286.2L386.9,289.6L387.5,295.6L388.2,306.1L388.8,305.5L389.4,312.3L390.1,320.1L390.7,323.7L391.4,313.8L392.1,292.7L392.9,282.2L393.6,268.0L394.3,276.7L395.0,285.9L395.7,297.9L396.4,310.3L397.0,311.6L397.7,321.1L398.3,322.5L398.9,330.5L399.5,331.2L400.1,336.7L400.7,344.9L400.7,275.7L401.3,287.7L401.9,295.9L402.6,303.7L403.2,305.7L403.8,318.8L404.4,325.7L405.0,335.3L405.7,342.6L406.4,346.5L407.1,353.2L407.9,357.9L407.9,269.9L408.5,281.7L409.1,290.1L409.7,300.5L410.3,308.2L410.9,320.5L411.5,328.8L412.1,342.9L412.1,253.6L412.8,253.2L413.4,254.6L414.0,260.0L414.6,266.9L415.2,263.5L415.8,265.3L416.4,271.9L417.1,289.5L417.9,314.1L418.5,300.8L419.1,286.9L419.7,278.6L420.3,260.6L420.9,250.1L421.5,239.9L422.1,225.4L422.9,230.7L423.6,225.4L424.3,225.8L425.0,231.5L425.7,283.6L426.4,328.5L427.1,301.9L427.8,281.3L428.4,256.5L429.0,267.8L429.7,274.9L430.3,279.2L430.9,286.6L431.5,302.0L432.1,306.4L432.9,291.0L433.6,277.6L434.3,294.0L434.9,300.7L435.6,316.5L436.3,324.3L437.0,340.1L437.6,324.2L438.2,316.6L438.9,300.7L439.5,295.0L440.1,285.3L440.7,269.9L441.4,289.3L442.1,310.3L442.8,308.6L443.4,301.4L444.0,293.8L444.6,286.3L445.2,284.4L445.8,279.6L446.4,266.8L447.0,264.2L447.6,276.2L448.2,281.0L448.9,292.0L449.5,306.9L450.1,316.5L450.7,326.6L450.7,277.6L451.3,281.1L452.0,283.6L452.6,287.7L453.3,291.6L453.9,294.7L454.5,295.6L455.2,303.0L455.8,307.2L456.4,310.3L456.4,249.8L457.1,250.0L457.7,256.4L458.4,258.0L459.0,254.3L459.6,260.4L460.3,262.3L460.9,269.1L461.6,267.1L462.2,286.0L462.9,302.9L463.6,321.8L464.2,317.0L464.8,302.9L465.4,293.8L466.0,289.7L466.7,275.9L467.3,268.0L467.9,269.5L468.5,268.9L469.1,272.9L469.7,271.0L470.3,272.0L470.9,279.3L471.5,280.2L472.1,277.6L473.0,329.5L473.6,317.0L474.2,303.5L474.8,298.7L475.4,286.0L476.1,273.8L476.7,265.2L477.3,252.7L478.0,273.0L478.6,292.7L479.3,310.3L480.0,302.8L480.7,292.2L481.4,286.1L482.1,275.7L482.8,275.0L483.4,269.8L484.1,274.4L484.7,267.9L485.4,264.7L486.0,266.5L486.6,265.5L487.3,261.3L487.9,309.3L488.5,301.1L489.1,300.3L489.7,295.1L490.3,287.4L490.9,279.5L491.5,279.0L492.1,269.9L492.9,285.4L493.6,299.2L494.3,308.8L495.0,325.6L495.0,324.7L495.9,246.9L496.4,246.9L497.1,263.3L497.9,275.5L498.6,297.3L499.3,310.3L499.3,253.6L499.9,265.2L500.5,272.6L501.1,280.8L501.7,294.6L502.3,306.8L503.0,317.8L503.6,324.7L503.6,273.8L504.2,274.0L504.8,277.3L505.5,272.4L506.1,272.6L506.7,278.6L507.4,278.3L508.0,274.1L508.7,276.0L509.3,277.6L510.0,299.5L510.7,326.6L511.3,319.2L511.9,312.2L512.6,302.1L513.2,289.0L513.8,284.7L514.4,275.2L515.0,265.1L515.7,295.6L516.4,324.7L517.1,313.6L517.9,301.9L518.6,285.8L519.3,277.6L520.0,295.0L520.7,306.4L521.4,298.9L522.1,279.1L522.9,267.9L523.6,259.4L524.3,273.8L525.0,297.1L525.7,311.3L526.4,333.7L527.0,275.7L527.6,277.1L528.2,288.3L528.9,289.0L529.5,293.3L530.1,299.9L530.7,306.4L530.7,265.1L531.3,270.7L532.0,278.5L532.6,283.8L533.3,290.5L533.9,297.7L534.5,299.0L535.2,307.3L535.8,308.6L536.4,317.0L536.4,277.6L537.0,287.0L537.7,285.1L538.3,292.4L538.9,295.9L539.5,301.7L540.1,307.1L540.7,316.0L541.4,282.7L542.1,250.7L542.9,269.3L543.6,277.4L544.3,296.8L545.0,308.4L545.7,294.7L546.4,277.6L547.0,283.4L547.6,291.8L548.2,300.0L548.9,302.7L549.5,312.7L550.1,322.2L550.7,330.2L551.3,335.3L552.1,279.5L552.8,281.1L553.4,289.1L554.0,291.1L554.6,299.5L555.2,305.5L555.8,307.2L556.4,312.2L557.3,267.1L558.0,281.7L558.7,304.7L559.3,316.8L560.0,333.0L560.7,354.1L561.4,330.3L562.1,309.0L562.9,294.9L563.6,269.6L564.4,337.2L565.1,329.5L565.8,321.0L566.5,321.5L567.2,313.0L567.9,304.5L567.9,277.6L568.5,284.8L569.1,287.8L569.7,293.9L570.3,298.7L570.9,301.3L571.5,313.2L572.1,314.1L572.9,296.1L573.7,273.5L574.4,248.4L575.0,260.6L575.6,270.0L576.2,271.1L576.9,281.1L577.5,296.7L578.1,302.0L578.7,312.5L579.3,319.9L579.9,253.6L580.5,264.3L581.1,273.1L581.7,279.7L582.3,289.4L583.0,300.4L583.6,308.4L583.6,275.7L584.3,276.7L585.0,273.8L585.7,273.9L586.4,269.0L587.1,282.9L587.9,295.9L588.6,313.2L589.3,326.6L590.0,318.9L590.7,306.8L591.4,293.8L592.1,281.5L592.9,291.1L593.6,300.2L594.3,314.2L595.0,323.7L595.6,314.5L596.2,309.5L596.8,304.6L597.4,298.5L598.1,290.8L598.7,282.5L599.3,277.6L600.0,287.9L600.7,295.2L601.4,306.8L602.1,316.0L602.8,311.7L603.4,302.6L604.0,294.6L604.6,293.4L605.2,283.8L605.8,277.2L606.4,269.9L607.1,277.2L607.9,287.3L608.6,302.7L609.3,312.2L610.0,299.0L610.7,290.1L611.3,284.9L612.0,273.3L612.7,263.2L613.3,274.3L614.0,276.2L614.6,285.4L615.2,291.3L615.8,299.9L616.4,310.3L617.3,257.5L618.0,260.0L618.7,263.5L619.3,269.0L620.0,277.0L620.7,277.6L621.4,296.1L622.1,316.0L622.8,313.7L623.4,305.9L624.0,293.9L624.6,293.6L625.2,286.6L625.8,280.0L626.4,269.9L626.4,269.9L627.1,302.7L627.9,342.0L628.4,342.0L629.2,324.6L630.0,305.7L630.7,281.5L631.4,293.9L632.1,312.2L632.8,310.3L633.4,298.8L634.0,295.1L634.6,288.5L635.2,282.2L635.8,280.2L636.4,275.7L637.1,304.1L637.9,337.6L638.5,337.7L639.1,327.5L639.7,325.8L640.3,320.1L640.9,321.5L641.5,312.0L642.1,310.3L642.1,277.6L642.8,279.9L643.4,293.5L644.0,297.3L644.6,301.2L645.2,305.0L645.8,316.1L646.4,319.9L647.3,273.8L648.0,283.1L648.7,289.0L649.3,292.4L650.0,297.7L650.7,306.4L651.4,282.6L652.1,256.9L652.9,275.9L653.6,293.6L654.3,311.9L655.0,328.5L655.9,275.7L656.5,280.0L657.1,286.5L657.7,286.5L658.3,286.0L658.9,294.5L659.5,295.2L660.1,303.8L660.7,304.5L660.7,260.3L661.3,265.3L661.9,271.3L662.6,278.6L663.2,286.5L663.8,293.4L664.4,298.6L665.0,306.4L665.0,275.7L665.6,280.7L666.2,295.5L666.8,304.3L667.4,307.0L668.1,314.0L668.7,325.8L669.3,334.3L670.0,309.3L670.7,283.4L671.3,336.2L671.9,330.0L672.5,330.3L673.1,325.3L673.8,321.5L674.4,313.9L675.0,310.3L675.0,257.5L675.6,260.2L676.2,262.0L676.9,259.2L677.5,258.0L678.1,264.8L678.7,264.2L679.3,316.0L680.0,298.2L680.7,284.6L681.4,264.7L682.1,251.7L682.9,277.4L683.6,304.5L684.3,292.1L685.0,275.7L685.7,271.0L686.4,265.6L687.1,254.6L687.7,248.3L688.4,240.2L689.3,316.0L690.0,292.9L690.8,265.4L691.6,238.3L692.3,249.1L693.0,254.6L693.7,269.4L694.4,275.7L695.0,323.7L695.6,313.5L696.2,311.8L696.8,304.8L697.4,299.9L698.1,290.7L698.7,284.7L699.3,281.5L700.0,304.0L700.7,327.6L701.4,313.3L702.1,296.9L702.9,281.3L703.6,269.9L704.3,287.6L705.0,301.5L705.7,316.4L706.4,337.2L707.1,333.1L707.9,330.9L708.6,326.5L709.3,319.9L709.3,279.5L709.9,286.3L710.5,295.3L711.1,301.5L711.8,311.1L712.4,325.0L713.0,331.4L713.6,271.9L714.3,284.6L715.0,294.1L715.7,304.8L716.4,312.2L717.1,284.7L717.9,260.7L718.6,257.2L719.4,256.4L720.1,259.4L720.8,281.7L721.5,296.6L722.1,319.9L722.9,300.4L723.6,277.6L724.2,276.2L724.8,271.5L725.4,275.0L726.0,272.8L726.7,264.3L727.3,265.1L727.9,316.0L728.5,312.6L729.1,306.9L729.7,299.7L730.3,293.7L730.9,294.2L731.5,286.2L732.1,279.5L732.9,299.3L733.6,318.0L734.2,311.2L734.8,306.7L735.4,296.7L736.0,286.6L736.6,284.6L737.2,276.4L737.9,269.9L738.6,292.4L739.3,308.4L739.9,304.7L740.5,295.7L741.1,294.8L741.7,282.5L742.3,276.7L743.0,278.1L743.6,269.0L744.3,290.6L745.0,319.9L745.7,300.8L746.4,279.5L747.2,294.2L748.0,311.3L748.7,330.4L749.4,311.4L750.0,287.3L750.7,268.0L751.4,279.7L752.1,291.3L752.9,308.9L753.6,319.9L754.3,317.7L755.0,315.9L755.7,318.4L756.4,319.9L756.4,266.1L756.4,266.1L757.0,266.3L757.7,270.5L758.3,267.8L758.9,269.6L759.5,267.0L760.1,267.9L760.7,269.9L761.3,343.9L761.9,338.0L762.5,336.1L763.1,326.8L763.8,321.6L764.4,320.2L765.0,312.2L765.0,275.7L765.6,280.3L766.2,290.4L766.9,303.0L767.5,304.0L768.1,318.8L768.7,323.7L769.3,281.5L770.0,297.6L770.7,308.9L771.4,324.6L772.1,340.1L772.9,323.0L773.6,305.6L774.3,290.7L775.0,273.8L775.7,292.7L776.4,308.4L777.1,303.0L777.9,295.7L778.6,282.0L779.3,275.7L780.0,284.6L780.7,297.4L781.4,306.8L782.1,319.9L782.9,300.9L783.6,279.5L784.3,289.2L785.0,295.9L785.7,299.4L786.4,310.3L787.0,264.2L787.6,276.8L788.2,281.4L788.9,292.3L789.5,296.4L790.1,308.7L790.7,316.0L791.3,259.4L791.9,264.5L792.5,267.5L793.2,270.0L793.8,271.6L794.4,277.6L795.0,330.4L795.7,332.9L796.4,329.9L797.1,337.4L797.9,335.3L797.9,283.4L798.5,291.7L799.1,299.5L799.7,305.7L800.3,306.2L800.9,313.0L801.5,324.0L802.1,327.6L802.1,277.6L802.8,285.2L803.4,288.2L804.0,290.3L804.6,294.7L805.2,300.2L805.8,306.5L806.4,312.2L807.2,299.9L808.0,282.3L808.7,266.1L809.4,279.3L810.1,287.0L810.8,297.2L811.5,310.9L812.1,318.9L812.1,281.5L812.8,287.5L813.4,286.7L814.0,297.0L814.6,294.2L815.2,297.3L815.8,300.6L816.4,308.4L816.4,275.7L817.0,273.7L817.7,269.2L818.3,265.9L818.9,262.5L819.5,256.5L820.1,256.0L820.7,254.6L821.4,285.1L822.1,312.2L822.8,285.9L823.5,266.0L824.1,242.7L824.9,267.5L825.7,292.2L826.4,319.9L826.4,275.7L827.0,287.4L827.7,288.2L828.3,296.5L828.9,305.4L829.5,312.5L830.1,320.5L830.7,327.6L830.7,271.9L831.3,284.1L831.9,290.8L832.6,304.7L833.2,310.3L833.8,318.6L834.4,330.0L835.0,339.1L835.0,283.4L835.7,293.9L836.4,301.5L837.1,313.1L837.9,327.6L838.6,316.3L839.3,296.2L840.0,283.3L840.7,269.9L841.6,341.4L842.3,340.2L842.9,332.5L843.6,328.5L844.3,324.8L845.0,316.0L845.0,269.0L845.6,276.2L846.2,280.4L846.8,293.1L847.4,296.0L848.1,305.0L848.7,317.4L849.3,321.8L849.3,268.0L849.9,270.4L850.5,278.1L851.1,280.8L851.7,288.1L852.3,293.4L853.0,302.3L853.6,306.4L853.6,258.4L854.2,254.0L854.8,251.2L855.4,250.0L856.0,251.9L856.7,247.4L857.3,247.9L857.9,319.9L858.6,305.9L859.4,295.1L860.1,277.6L860.8,298.9L861.5,315.8L862.1,329.5L862.9,313.8L863.7,295.9L864.4,274.7L865.0,340.1L866.1,302.7L866.1,295.5L370.5,295.5Z" fill="#000" stroke="#000" stroke-width="0.9" stroke-linejoin="round"/>
<path d="M370.5,285.1L371.2,303.6L371.9,287.3L372.1,270.3L372.6,306.5L373.3,287.5L373.6,315.0L374.0,283.6L374.7,307.9L375.4,288.2L376.1,317.6L376.8,285.7L377.5,308.2L377.9,330.5L377.9,284.0L378.2,317.4L378.9,291.6L379.6,313.6L380.3,284.6L381.0,317.5L381.7,284.7L382.4,312.9L383.1,288.6L383.6,313.2L383.8,289.2L384.5,306.6L385.0,276.7L385.2,305.3L385.9,286.6L386.6,308.1L387.3,279.4L388.0,314.6L388.7,276.0L389.4,305.9L390.1,274.7L390.7,322.3L390.8,279.3L391.5,306.7L392.2,278.5L392.9,302.7L393.6,269.4L393.6,313.4L394.3,278.0L395.0,302.0L395.7,280.2L396.4,301.1L396.4,309.5L397.1,288.1L397.8,308.1L398.5,276.9L399.2,326.1L399.9,288.9L400.6,312.1L400.7,342.4L400.7,276.7L401.3,315.8L402.0,287.9L402.7,323.2L403.4,279.2L404.1,314.7L404.8,284.1L405.0,333.3L405.5,282.1L406.2,324.2L406.9,281.1L407.6,332.9L407.9,354.8L407.9,271.2L408.3,317.6L409.0,276.7L409.7,311.8L410.4,274.8L411.1,319.9L411.8,280.9L412.1,340.6L412.1,255.7L412.5,316.6L413.2,277.6L413.9,320.7L414.6,287.2L415.3,320.9L416.0,285.0L416.4,273.0L416.7,306.5L417.4,284.3L417.9,313.2L418.1,276.8L418.8,304.1L419.5,279.5L420.2,309.8L420.9,274.4L421.6,306.2L422.1,228.9L422.3,307.1L423.0,271.6L423.7,306.3L424.4,260.6L425.0,234.7L425.1,307.5L425.8,261.4L426.4,326.9L426.5,266.8L427.2,304.8L427.9,278.5L428.4,258.4L428.6,313.4L429.3,282.6L430.0,307.9L430.7,281.9L431.4,300.7L432.1,284.6L432.1,305.9L432.8,285.7L433.5,304.2L433.6,278.5L434.2,305.6L434.9,282.4L435.6,325.8L436.3,280.8L437.0,337.8L437.0,286.5L437.7,326.8L438.4,282.6L439.1,309.5L439.8,288.2L440.5,305.7L440.7,271.2L441.2,303.0L441.9,277.9L442.1,309.5L442.6,273.1L443.3,306.3L444.0,278.2L444.7,303.3L445.4,279.8L446.1,311.9L446.8,281.6L447.0,265.7L447.5,311.9L448.2,277.6L448.9,304.2L449.6,280.5L450.3,313.2L450.7,325.1L450.7,278.5L451.0,316.7L451.7,287.3L452.4,314.9L453.1,285.2L453.8,306.5L454.5,279.1L455.2,301.7L455.9,284.8L456.4,309.5L456.4,252.1L456.6,299.7L457.3,264.2L458.0,302.7L458.7,280.3L459.4,305.5L460.1,280.8L460.8,302.8L461.5,282.0L461.6,268.5L462.2,306.0L462.9,288.2L463.6,320.5L463.6,281.8L464.3,308.5L465.0,279.3L465.7,308.1L466.4,278.5L467.1,312.9L467.3,269.4L467.8,306.6L468.5,280.1L469.2,307.5L469.9,279.7L470.6,310.6L471.3,281.4L472.0,310.8L472.1,278.5L472.7,315.8L473.0,327.8L473.4,276.9L474.1,313.9L474.8,277.0L475.5,308.4L476.2,284.4L476.9,302.7L477.3,254.8L477.6,300.9L478.3,280.5L479.0,304.7L479.3,309.5L479.7,275.1L480.4,305.2L481.1,280.8L481.8,300.5L482.1,276.7L482.5,303.7L483.2,286.6L483.9,307.2L484.6,285.5L485.3,305.8L486.0,286.5L486.7,303.1L487.3,263.0L487.4,302.2L487.9,308.6L488.1,282.5L488.8,302.7L489.5,283.2L490.2,305.5L490.9,286.0L491.6,311.0L492.1,271.2L492.3,308.9L493.0,277.9L493.7,307.1L494.4,273.0L495.0,323.2L495.0,323.2L495.1,271.7L495.8,313.4L495.9,249.3L496.4,249.3L496.5,304.4L497.2,271.5L497.9,302.0L498.6,261.8L499.3,309.5L499.3,255.7L499.3,303.7L500.0,268.8L500.7,302.9L501.4,287.2L502.1,306.0L502.8,286.5L503.5,313.4L503.6,323.2L503.6,274.9L504.2,316.3L504.9,284.9L505.6,314.7L506.3,284.3L507.0,313.5L507.7,285.6L508.4,319.6L509.1,288.2L509.3,278.5L509.8,313.7L510.5,278.9L510.7,325.1L511.2,285.4L511.9,305.4L512.6,280.4L513.3,318.2L514.0,276.9L514.7,308.7L515.0,266.7L515.4,305.9L516.1,279.3L516.4,323.2L516.8,286.6L517.5,310.8L518.2,289.1L518.9,304.8L519.3,278.5L519.6,303.3L520.3,285.3L520.7,305.9L521.0,286.7L521.7,303.8L522.4,274.9L523.1,303.6L523.6,261.2L523.8,309.1L524.5,274.6L525.2,315.1L525.9,277.9L526.4,331.8L526.6,282.1L527.0,276.7L527.3,317.5L528.0,288.1L528.7,306.6L529.4,278.7L530.1,301.2L530.7,305.9L530.7,266.7L530.8,302.3L531.5,275.9L532.2,300.7L532.9,285.4L533.6,305.5L534.3,282.6L535.0,304.9L535.7,288.8L536.4,307.5L536.4,315.9L536.4,278.5L537.1,306.9L537.8,284.2L538.5,304.2L539.2,283.5L539.9,303.1L540.6,276.3L540.7,315.0L541.3,276.5L542.0,307.3L542.1,253.0L542.7,306.9L543.4,283.1L544.1,299.2L544.8,277.5L545.0,307.7L545.5,288.0L546.2,306.0L546.4,278.5L546.9,309.4L547.6,289.6L548.3,305.1L549.0,286.4L549.7,306.5L550.4,289.6L551.1,324.5L551.3,333.3L551.8,286.8L552.1,280.3L552.5,314.9L553.2,279.9L553.9,308.0L554.6,282.7L555.3,309.9L556.0,279.9L556.4,311.4L556.7,281.8L557.3,268.5L557.4,308.7L558.1,282.3L558.8,312.9L559.5,282.4L560.2,335.2L560.7,351.1L560.9,284.6L561.6,328.4L562.3,285.1L563.0,309.8L563.6,270.9L563.7,328.7L564.4,279.4L564.4,335.1L565.1,287.5L565.8,312.9L566.5,281.4L567.2,303.0L567.9,304.1L567.9,278.5L567.9,303.1L568.6,283.6L569.3,302.6L570.0,287.4L570.7,300.7L571.4,280.8L572.1,305.5L572.1,313.2L572.8,274.1L573.5,304.6L574.2,273.8L574.4,250.8L574.9,309.3L575.6,273.4L576.3,305.7L577.0,277.1L577.7,301.5L578.4,277.9L579.1,302.8L579.3,318.7L579.8,281.3L579.9,255.7L580.5,302.0L581.2,287.1L581.9,302.8L582.6,290.5L583.3,301.1L583.6,307.7L583.6,276.7L584.0,300.1L584.7,287.0L585.4,308.5L586.1,289.2L586.4,270.3L586.8,302.7L587.5,285.7L588.2,302.0L588.9,286.6L589.3,325.1L589.6,284.9L590.3,308.8L591.0,289.2L591.7,314.5L592.1,282.2L592.4,305.4L593.1,284.0L593.8,304.8L594.5,291.5L595.0,322.3L595.2,292.0L595.9,309.7L596.6,289.2L597.3,309.3L598.0,281.8L598.7,305.3L599.3,278.5L599.4,308.9L600.1,287.5L600.8,310.2L601.5,286.7L602.1,315.0L602.2,283.6L602.9,303.8L603.6,280.9L604.3,307.3L605.0,283.2L605.7,303.0L606.4,280.8L606.4,271.2L607.1,301.4L607.8,278.4L608.5,303.5L609.2,284.6L609.3,311.4L609.9,285.0L610.6,306.1L611.3,283.7L612.0,305.9L612.7,270.9L612.7,264.8L613.4,303.5L614.1,271.1L614.8,302.0L615.5,280.2L616.2,301.4L616.4,309.5L616.9,283.1L617.3,259.4L617.6,304.2L618.3,286.8L619.0,304.3L619.7,288.4L620.4,308.4L620.7,278.5L621.1,304.2L621.8,283.2L622.1,315.0L622.5,281.9L623.2,303.7L623.9,289.4L624.6,307.1L625.3,279.5L626.0,321.8L626.4,271.2L626.4,271.2L626.7,312.0L627.4,282.0L627.9,339.7L628.1,284.0L628.4,339.7L628.8,281.4L629.5,314.0L630.2,290.3L630.7,282.2L630.9,310.7L631.6,289.2L632.1,311.4L632.3,287.4L633.0,303.1L633.7,287.2L634.4,308.4L635.1,286.3L635.8,313.9L636.4,276.7L636.5,309.3L637.2,285.4L637.9,335.5L637.9,288.5L638.6,306.0L639.3,282.1L640.0,318.4L640.7,280.7L641.4,304.8L642.1,280.6L642.1,309.5L642.1,278.5L642.8,304.8L643.5,285.1L644.2,312.2L644.9,280.3L645.6,303.1L646.3,286.1L646.4,318.7L647.0,282.6L647.3,274.9L647.7,307.0L648.4,284.2L649.1,304.7L649.8,282.5L650.5,299.1L650.7,305.9L651.2,284.2L651.9,304.7L652.1,258.8L652.6,311.1L653.3,269.6L654.0,304.4L654.7,282.9L655.0,326.9L655.4,283.8L655.9,276.7L656.1,314.3L656.8,285.2L657.5,311.6L658.2,286.4L658.9,301.8L659.6,281.8L660.3,299.7L660.7,304.1L660.7,262.1L661.0,298.4L661.7,280.2L662.4,302.4L663.1,285.2L663.8,298.4L664.5,285.8L665.0,305.9L665.0,276.7L665.2,300.9L665.9,288.8L666.6,308.0L667.3,289.7L668.0,306.2L668.7,286.7L669.3,332.4L669.4,285.2L670.1,305.1L670.7,284.0L670.8,321.8L671.3,334.2L671.5,283.4L672.2,309.3L672.9,288.6L673.6,313.9L674.3,277.5L675.0,307.1L675.0,309.5L675.0,259.4L675.7,305.3L676.4,277.0L677.1,301.5L677.8,268.5L678.5,304.3L678.7,265.7L679.2,304.8L679.3,315.0L679.9,276.1L680.6,302.5L681.3,274.5L682.0,305.0L682.1,253.9L682.7,304.7L683.4,284.6L683.6,304.1L684.1,280.5L684.8,300.4L685.0,276.7L685.5,305.6L686.2,278.2L686.9,303.5L687.6,258.1L688.3,302.7L688.4,242.9L689.0,304.2L689.3,315.0L689.7,257.2L690.4,304.4L691.1,248.5L691.6,241.1L691.8,305.6L692.5,280.2L693.2,314.2L693.9,287.3L694.4,276.7L694.6,302.3L695.0,322.3L695.3,284.2L696.0,312.5L696.7,289.7L697.4,317.5L698.1,290.3L698.8,307.1L699.3,282.2L699.5,305.3L700.2,284.1L700.7,326.0L700.9,283.8L701.6,320.1L702.3,283.1L703.0,303.8L703.6,271.2L703.7,308.7L704.4,280.5L705.1,310.3L705.8,283.2L706.4,335.1L706.5,288.6L707.2,324.8L707.9,289.9L708.6,303.7L709.3,318.7L709.3,280.3L709.3,312.3L710.0,290.8L710.7,319.5L711.4,287.3L712.1,320.6L712.8,281.6L713.0,329.6L713.5,288.8L713.6,273.0L714.2,313.3L714.9,280.0L715.6,306.2L716.3,279.3L716.4,311.4L717.0,281.8L717.7,309.4L717.9,262.5L718.4,303.5L719.1,267.3L719.8,303.3L720.1,261.2L720.5,301.1L721.2,277.7L721.9,304.2L722.1,318.7L722.6,279.5L723.3,315.5L723.6,278.5L724.0,308.8L724.7,287.7L725.4,306.8L726.1,281.9L726.8,306.0L727.3,266.7L727.5,303.6L727.9,315.0L728.2,281.4L728.9,312.5L729.6,278.5L730.3,312.0L731.0,289.4L731.7,309.2L732.1,280.3L732.4,307.7L733.1,282.8L733.6,316.8L733.8,286.9L734.5,310.2L735.2,283.3L735.9,305.7L736.6,285.5L737.3,306.9L737.9,271.2L738.0,305.3L738.7,276.5L739.3,307.7L739.4,287.0L740.1,305.7L740.8,277.9L741.5,303.5L742.2,283.5L742.9,304.3L743.6,270.3L743.6,311.3L744.3,287.6L745.0,305.3L745.0,318.7L745.7,288.9L746.4,304.9L746.4,280.3L747.1,302.5L747.8,280.7L748.5,316.0L748.7,328.7L749.2,278.0L749.9,312.4L750.6,284.8L750.7,269.4L751.3,311.0L752.0,274.7L752.7,305.2L753.4,278.0L753.6,318.7L754.1,287.7L754.8,302.5L755.5,284.0L756.2,305.2L756.4,318.7L756.4,267.6L756.4,267.6L756.9,307.4L757.6,277.8L758.3,305.8L759.0,276.5L759.7,311.5L760.4,273.0L760.7,271.2L761.1,304.8L761.3,341.5L761.8,283.4L762.5,321.8L763.2,285.4L763.9,314.7L764.6,287.4L765.0,311.4L765.0,276.7L765.3,304.6L766.0,283.6L766.7,306.8L767.4,291.2L768.1,313.5L768.7,322.3L768.8,290.4L769.3,282.2L769.5,316.5L770.2,290.3L770.9,323.6L771.6,287.8L772.1,337.8L772.3,288.0L773.0,325.2L773.7,281.9L774.4,303.6L775.0,274.9L775.1,304.3L775.8,280.9L776.4,307.7L776.5,282.4L777.2,301.2L777.9,285.5L778.6,301.4L779.3,276.7L779.3,303.3L780.0,282.1L780.7,302.5L781.4,287.8L782.1,303.7L782.1,318.7L782.8,286.2L783.5,301.5L783.6,280.3L784.2,303.5L784.9,287.4L785.6,301.6L786.3,279.2L786.4,309.5L787.0,276.8L787.0,265.7L787.7,303.8L788.4,277.0L789.1,301.0L789.8,269.8L790.5,306.3L790.7,315.0L791.2,269.9L791.3,261.2L791.9,305.2L792.6,272.0L793.3,318.1L794.0,287.9L794.4,278.5L794.7,310.8L795.0,328.7L795.4,285.9L796.1,312.7L796.8,287.6L797.5,322.4L797.9,333.3L797.9,284.0L798.2,314.3L798.9,285.6L799.6,305.4L800.3,286.3L801.0,318.1L801.7,284.8L802.1,326.0L802.1,278.5L802.4,318.4L803.1,285.9L803.8,309.7L804.5,284.3L805.2,306.2L805.9,280.6L806.4,311.4L806.6,283.8L807.3,303.5L808.0,278.6L808.7,302.4L808.7,267.6L809.4,302.8L810.1,287.8L810.8,303.6L811.5,287.8L812.1,317.8L812.1,282.2L812.2,300.5L812.9,284.6L813.6,305.6L814.3,290.5L815.0,301.7L815.7,288.1L816.4,302.5L816.4,307.7L816.4,276.7L817.1,300.9L817.8,283.2L818.5,303.0L819.2,282.9L819.9,306.9L820.6,264.5L820.7,256.6L821.3,305.0L822.0,275.8L822.1,311.4L822.7,257.5L823.4,307.0L824.1,266.6L824.1,245.3L824.8,305.1L825.5,273.4L826.2,307.8L826.4,318.7L826.4,276.7L826.9,308.1L827.6,286.8L828.3,311.3L829.0,288.7L829.7,311.7L830.4,281.6L830.7,326.0L830.7,273.0L831.1,320.0L831.8,281.9L832.5,305.9L833.2,284.3L833.9,312.5L834.6,285.8L835.0,336.9L835.0,284.0L835.3,319.1L836.0,290.3L836.7,318.7L837.4,288.8L837.9,326.0L838.1,285.4L838.8,310.5L839.5,290.5L840.2,317.3L840.7,271.2L840.9,331.1L841.6,339.1L841.6,286.3L842.3,309.9L843.0,281.0L843.7,304.0L844.4,285.1L845.0,315.0L845.0,270.3L845.1,303.6L845.8,282.6L846.5,308.0L847.2,283.0L847.9,307.0L848.6,281.9L849.3,320.5L849.3,269.4L849.3,306.3L850.0,284.4L850.7,306.4L851.4,282.6L852.1,299.2L852.8,283.6L853.5,299.5L853.6,305.9L853.6,260.3L854.2,303.0L854.9,269.2L855.6,303.8L856.3,282.4L857.0,307.6L857.3,250.2L857.7,312.4L857.9,318.7L858.4,275.1L859.1,303.9L859.8,286.2L860.1,278.5L860.5,318.3L861.2,286.6L861.9,307.6L862.1,327.8L862.6,285.4L863.3,310.7L864.0,284.0L864.4,275.8L864.7,327.9L865.0,337.8L865.4,287.7L866.1,309.6" fill="none" stroke="#000" stroke-width="1" stroke-linejoin="bevel"/>
<path d="M370.5,290.5L371.0,301.1L371.5,288.2L372.0,299.8L372.5,290.7L373.0,303.0L373.5,284.7L374.0,301.5L374.5,290.4L375.0,301.4L375.5,291.1L376.0,301.2L376.5,289.6L377.0,302.6L377.5,288.8L378.0,301.7L378.5,289.4L379.0,303.7L379.5,289.0L380.0,302.1L380.5,289.5L381.0,302.2L381.5,288.8L382.0,303.4L382.5,285.8L383.0,302.6L383.5,290.6L384.0,300.4L384.5,288.1L385.0,301.5L385.5,287.7L386.0,300.6L386.5,289.9L387.0,299.6L387.5,289.9L388.0,301.3L388.5,290.9L389.0,303.1L389.5,287.3L390.0,299.9L390.5,289.5L391.0,299.9L391.5,289.0L392.0,300.3L392.5,291.1L393.0,301.6L393.5,291.0L394.0,301.9L394.5,288.8L395.0,303.1L395.5,288.2L396.0,300.9L396.5,289.2L397.0,300.6L397.5,287.7L398.0,303.5L398.5,287.5L399.0,301.5L399.5,288.2L400.0,305.5L400.5,288.8L401.0,303.3L401.5,287.8L402.0,302.0L402.5,286.0L403.0,302.5L403.5,286.2L404.0,303.0L404.5,286.9L405.0,307.9L405.5,286.5L406.0,305.6L406.5,287.1L407.0,305.3L407.5,288.7L408.0,303.3L408.5,289.5L409.0,302.5L409.5,288.1L410.0,303.3L410.5,288.7L411.0,302.7L411.5,288.5L412.0,301.6L412.5,290.3L413.0,300.9L413.5,289.2L414.0,302.0L414.5,288.8L415.0,302.2L415.5,287.5L416.0,302.4L416.5,283.5L417.0,302.0L417.5,287.2L418.0,302.3L418.5,288.7L419.0,302.7L419.5,287.4L420.0,302.4L420.5,287.8L421.0,307.7L421.5,289.4L422.0,307.8L422.5,283.1L423.0,304.2L423.5,288.6L424.0,305.4L424.5,285.2L425.0,306.9L425.5,283.1L426.0,304.4L426.5,288.0L427.0,301.2L427.5,290.2L428.0,300.6L428.5,289.1L429.0,300.3L429.5,288.7L430.0,300.2L430.5,290.6L431.0,301.5L431.5,289.6L432.0,301.6L432.5,288.1L433.0,301.8L433.5,289.3L434.0,303.0L434.5,289.6L435.0,303.8L435.5,288.1L436.0,300.8L436.5,288.4L437.0,301.3L437.5,291.1L438.0,301.8L438.5,290.8L439.0,301.7L439.5,288.6L440.0,305.3L440.5,291.1L441.0,302.2L441.5,289.9L442.0,303.4L442.5,287.9L443.0,303.7L443.5,289.9L444.0,302.8L444.5,288.6L445.0,300.3L445.5,288.7L446.0,301.0L446.5,290.2L447.0,301.5L447.5,287.8L448.0,303.9L448.5,285.1L449.0,303.9L449.5,288.2L450.0,304.1L450.5,287.9L451.0,301.5L451.5,286.8L452.0,301.7L452.5,288.7L453.0,303.6L453.5,290.0L454.0,301.5L454.5,286.7L455.0,303.9L455.5,290.8L456.0,302.8L456.5,285.5L457.0,300.7L457.5,287.4L458.0,301.7L458.5,289.3L459.0,302.7L459.5,288.1L460.0,301.3L460.5,288.7L461.0,301.9L461.5,288.7L462.0,302.2L462.5,288.7L463.0,304.8L463.5,290.6L464.0,300.9L464.5,289.4L465.0,300.0L465.5,289.5L466.0,303.8L466.5,288.8L467.0,300.3L467.5,288.8L468.0,300.8L468.5,289.1L469.0,300.5L469.5,288.0L470.0,300.7L470.5,288.3L471.0,302.4L471.5,288.6L472.0,301.5L472.5,287.5L473.0,302.5L473.5,287.4L474.0,303.3L474.5,290.2L475.0,303.4L475.5,290.4L476.0,304.2L476.5,288.7L477.0,303.8L477.5,288.1L478.0,302.0L478.5,287.8L479.0,300.0L479.5,289.5L480.0,303.3L480.5,290.2L481.0,300.6L481.5,289.1L482.0,301.9L482.5,289.7L483.0,303.3L483.5,290.4L484.0,305.5L484.5,286.8L485.0,300.7L485.5,288.8L486.0,301.6L486.5,284.1L487.0,302.1L487.5,290.5L488.0,307.2L488.5,290.0L489.0,303.8L489.5,287.9L490.0,305.1L490.5,286.6L491.0,302.6L491.5,288.0L492.0,302.8L492.5,289.3L493.0,299.6L493.5,289.0L494.0,300.2L494.5,288.0L495.0,301.1L495.5,290.1L496.0,303.3L496.5,289.2L497.0,305.1L497.5,288.1L498.0,302.0L498.5,286.0L499.0,301.1L499.5,288.3L500.0,303.2L500.5,286.6L501.0,303.8L501.5,288.8L502.0,301.4L502.5,288.1L503.0,301.2L503.5,290.3L504.0,305.9L504.5,287.7L505.0,302.3L505.5,288.5L506.0,303.2L506.5,288.5L507.0,301.4L507.5,289.1L508.0,301.2L508.5,291.4L509.0,300.3L509.5,289.2L510.0,299.9L510.5,288.1L511.0,301.0L511.5,288.7L512.0,300.7L512.5,287.8L513.0,301.9L513.5,288.9L514.0,301.1L514.5,288.8L515.0,305.6L515.5,287.9L516.0,305.2L516.5,287.7L517.0,302.6L517.5,291.0L518.0,302.3L518.5,290.4L519.0,300.9L519.5,290.3L520.0,301.6L520.5,290.7L521.0,300.2L521.5,290.6L522.0,301.7L522.5,290.0L523.0,301.4L523.5,287.3L524.0,300.8L524.5,289.2L525.0,302.4L525.5,289.8L526.0,303.8L526.5,287.5L527.0,305.6L527.5,288.4L528.0,302.9L528.5,287.5L529.0,306.6L529.5,289.4L530.0,306.6L530.5,288.9L531.0,304.3L531.5,286.7L532.0,302.0L532.5,288.2L533.0,303.8L533.5,283.1L534.0,302.4L534.5,286.8L535.0,303.2L535.5,285.3L536.0,301.9L536.5,288.9L537.0,301.3L537.5,290.0L538.0,300.2L538.5,291.4L539.0,300.6L539.5,289.7L540.0,303.9L540.5,289.2L541.0,302.3L541.5,291.2L542.0,300.8L542.5,288.6L543.0,304.4L543.5,288.7L544.0,301.1L544.5,290.9L545.0,301.4L545.5,290.6L546.0,302.0L546.5,291.2L547.0,301.5L547.5,288.9L548.0,300.5L548.5,288.8L549.0,301.1L549.5,289.6L550.0,303.0L550.5,290.5L551.0,302.5L551.5,289.5L552.0,301.0L552.5,288.3L553.0,302.6L553.5,286.6L554.0,303.6L554.5,283.9L555.0,303.3L555.5,288.8L556.0,302.9L556.5,289.8L557.0,303.7L557.5,289.5L558.0,307.9L558.5,289.6L559.0,304.2L559.5,286.3L560.0,302.6L560.5,289.2L561.0,304.3L561.5,286.1L562.0,306.9L562.5,286.3L563.0,304.0L563.5,288.9L564.0,301.4L564.5,283.1L565.0,304.9L565.5,287.9L566.0,305.1L566.5,287.3L567.0,306.1L567.5,287.3L568.0,302.1L568.5,289.5L569.0,301.3L569.5,288.1L570.0,302.4L570.5,286.5L571.0,303.1L571.5,286.4L572.0,302.3L572.5,283.9L573.0,302.7L573.5,286.6L574.0,301.7L574.5,288.1L575.0,301.5L575.5,289.6L576.0,301.9L576.5,287.4L577.0,304.7L577.5,290.4L578.0,303.2L578.5,285.7L579.0,303.5L579.5,288.2L580.0,301.5L580.5,287.0L581.0,304.2L581.5,288.4L582.0,302.5L582.5,287.4L583.0,302.8L583.5,287.5L584.0,302.9L584.5,288.8L585.0,301.7L585.5,287.6L586.0,301.6L586.5,289.2L587.0,302.3L587.5,289.2L588.0,307.7L588.5,290.1L589.0,300.7L589.5,288.1L590.0,301.0L590.5,288.4L591.0,302.6L591.5,287.6L592.0,302.5L592.5,287.2L593.0,303.5L593.5,289.3L594.0,302.9L594.5,289.5L595.0,301.7L595.5,289.1L596.0,300.4L596.5,289.7L597.0,302.1L597.5,289.1L598.0,300.3L598.5,288.7L599.0,302.3L599.5,288.8L600.0,302.1L600.5,289.0L601.0,301.9L601.5,288.2L602.0,302.2L602.5,287.8L603.0,302.7L603.5,288.2L604.0,301.1L604.5,289.1L605.0,301.5L605.5,290.3L606.0,301.3L606.5,289.7L607.0,301.1L607.5,289.5L608.0,301.6L608.5,289.1L609.0,301.0L609.5,290.2L610.0,301.9L610.5,289.8L611.0,301.2L611.5,288.7L612.0,300.6L612.5,286.1L613.0,303.9L613.5,290.7L614.0,301.8L614.5,288.7L615.0,302.7L615.5,289.6L616.0,305.2L616.5,288.5L617.0,301.4L617.5,288.5L618.0,301.7L618.5,288.7L619.0,302.8L619.5,289.1L620.0,300.1L620.5,287.9L621.0,303.8L621.5,289.7L622.0,300.4L622.5,287.7L623.0,300.5L623.5,291.3L624.0,302.3L624.5,289.7L625.0,302.1L625.5,287.3L626.0,305.0L626.5,289.9L627.0,300.7L627.5,288.9L628.0,302.7L628.5,288.6L629.0,302.7L629.5,288.6L630.0,303.0L630.5,289.5L631.0,303.9L631.5,288.8L632.0,302.9L632.5,287.0L633.0,301.3L633.5,287.7L634.0,302.6L634.5,288.6L635.0,303.7L635.5,285.8L636.0,302.4L636.5,288.3L637.0,303.7L637.5,286.5L638.0,301.8L638.5,288.3L639.0,305.4L639.5,286.8L640.0,302.1L640.5,287.6L641.0,305.0L641.5,289.5L642.0,302.1L642.5,286.1L643.0,305.4L643.5,288.2L644.0,305.6L644.5,285.2L645.0,302.0L645.5,290.0L646.0,302.9L646.5,289.1L647.0,302.0L647.5,287.6L648.0,304.5L648.5,288.6L649.0,304.7L649.5,285.7L650.0,301.9L650.5,286.6L651.0,301.8L651.5,286.4L652.0,307.7L652.5,289.0L653.0,304.7L653.5,288.0L654.0,303.0L654.5,287.5L655.0,304.5L655.5,288.3L656.0,303.1L656.5,290.0L657.0,302.2L657.5,288.9L658.0,300.0L658.5,290.0L659.0,300.9L659.5,285.6L660.0,300.4L660.5,290.7L661.0,302.3L661.5,290.7L662.0,300.7L662.5,284.2L663.0,302.8L663.5,290.3L664.0,301.3L664.5,290.3L665.0,302.3L665.5,288.8L666.0,302.1L666.5,288.5L667.0,302.3L667.5,290.5L668.0,302.7L668.5,290.8L669.0,302.8L669.5,288.9L670.0,300.6L670.5,290.0L671.0,299.9L671.5,288.5L672.0,301.4L672.5,288.8L673.0,301.1L673.5,291.2L674.0,301.4L674.5,289.1L675.0,299.7L675.5,289.9L676.0,302.0L676.5,291.1L677.0,301.9L677.5,289.8L678.0,301.2L678.5,289.2L679.0,300.7L679.5,290.3L680.0,300.9L680.5,290.0L681.0,302.8L681.5,290.4L682.0,304.3L682.5,287.9L683.0,301.1L683.5,287.4L684.0,304.7L684.5,285.9L685.0,303.4L685.5,288.7L686.0,304.2L686.5,287.5L687.0,302.7L687.5,287.7L688.0,302.1L688.5,287.9L689.0,302.3L689.5,290.1L690.0,303.2L690.5,289.1L691.0,303.1L691.5,288.8L692.0,302.6L692.5,290.1L693.0,302.2L693.5,288.7L694.0,305.7L694.5,285.4L695.0,306.5L695.5,283.4L696.0,304.3L696.5,285.8L697.0,304.8L697.5,286.0L698.0,302.3L698.5,286.9L699.0,304.9L699.5,286.9L700.0,302.7L700.5,287.1L701.0,303.1L701.5,287.3L702.0,302.5L702.5,289.8L703.0,301.1L703.5,287.6L704.0,301.8L704.5,287.2L705.0,305.2L705.5,285.4L706.0,304.3L706.5,287.2L707.0,304.6L707.5,288.2L708.0,303.6L708.5,287.2L709.0,305.9L709.5,285.9L710.0,305.5L710.5,289.0L711.0,305.2L711.5,285.2L712.0,303.8L712.5,287.1L713.0,305.1L713.5,288.8L714.0,305.0L714.5,288.0L715.0,302.3L715.5,288.6L716.0,302.9L716.5,290.0L717.0,300.3L717.5,288.4L718.0,302.8L718.5,288.6L719.0,303.0L719.5,290.0L720.0,300.0L720.5,288.3L721.0,303.3L721.5,289.6L722.0,301.8L722.5,287.9L723.0,302.4L723.5,289.3L724.0,303.4L724.5,289.5L725.0,301.8L725.5,288.9L726.0,302.7L726.5,290.1L727.0,302.6L727.5,290.8L728.0,300.3L728.5,290.2L729.0,300.4L729.5,289.7L730.0,302.6L730.5,288.0L731.0,302.0L731.5,290.7L732.0,304.3L732.5,290.6L733.0,301.4L733.5,289.0L734.0,300.9L734.5,289.9L735.0,301.8L735.5,291.1L736.0,300.7L736.5,288.5L737.0,302.3L737.5,290.2L738.0,302.0L738.5,289.6L739.0,300.3L739.5,287.1L740.0,300.4L740.5,291.2L741.0,300.4L741.5,288.9L742.0,301.9L742.5,289.1L743.0,299.7L743.5,291.2L744.0,301.8L744.5,285.9L745.0,302.1L745.5,291.1L746.0,302.2L746.5,288.7L747.0,300.0L747.5,289.8L748.0,304.2L748.5,290.3L749.0,302.5L749.5,290.7L750.0,300.7L750.5,289.4L751.0,300.3L751.5,288.9L752.0,304.4L752.5,289.2L753.0,300.4L753.5,289.6L754.0,300.7L754.5,288.7L755.0,301.9L755.5,290.5L756.0,301.0L756.5,285.7L757.0,305.0L757.5,289.8L758.0,302.8L758.5,287.9L759.0,301.7L759.5,288.2L760.0,301.7L760.5,290.1L761.0,303.2L761.5,288.0L762.0,301.9L762.5,287.5L763.0,303.5L763.5,286.3L764.0,301.7L764.5,289.5L765.0,302.4L765.5,290.5L766.0,305.4L766.5,287.9L767.0,302.3L767.5,289.8L768.0,303.0L768.5,290.2L769.0,301.1L769.5,290.5L770.0,302.9L770.5,287.1L771.0,301.2L771.5,288.8L772.0,303.5L772.5,288.3L773.0,301.5L773.5,289.9L774.0,302.6L774.5,288.4L775.0,300.8L775.5,290.3L776.0,300.3L776.5,289.8L777.0,303.2L777.5,291.1L778.0,300.8L778.5,289.4L779.0,302.3L779.5,289.1L780.0,302.2L780.5,290.7L781.0,300.2L781.5,289.8L782.0,301.5L782.5,289.1L783.0,302.9L783.5,289.2L784.0,302.0L784.5,290.4L785.0,304.9L785.5,289.8L786.0,302.1L786.5,290.9L787.0,303.0L787.5,289.2L788.0,300.5L788.5,291.0L789.0,301.5L789.5,290.8L790.0,301.2L790.5,290.8L791.0,302.6L791.5,290.1L792.0,303.0L792.5,290.2L793.0,303.7L793.5,289.5L794.0,303.1L794.5,291.2L795.0,302.4L795.5,290.1L796.0,301.4L796.5,284.6L797.0,303.6L797.5,288.1L798.0,303.2L798.5,287.5L799.0,304.1L799.5,288.2L800.0,301.5L800.5,286.2L801.0,301.9L801.5,287.0L802.0,302.3L802.5,288.3L803.0,302.7L803.5,289.0L804.0,301.2L804.5,286.4L805.0,302.9L805.5,288.5L806.0,302.9L806.5,288.4L807.0,300.8L807.5,288.2L808.0,304.3L808.5,287.9L809.0,300.7L809.5,287.9L810.0,301.5L810.5,287.6L811.0,304.7L811.5,288.1L812.0,302.8L812.5,290.3L813.0,307.5L813.5,287.2L814.0,306.6L814.5,288.7L815.0,302.8L815.5,288.2L816.0,303.2L816.5,288.1L817.0,301.2L817.5,287.7L818.0,303.8L818.5,288.6L819.0,302.4L819.5,287.9L820.0,304.9L820.5,285.4L821.0,304.2L821.5,287.2L822.0,304.8L822.5,283.1L823.0,303.3L823.5,289.5L824.0,304.7L824.5,288.8L825.0,302.7L825.5,287.6L826.0,303.9L826.5,289.8L827.0,302.0L827.5,288.5L828.0,304.8L828.5,287.0L829.0,305.3L829.5,287.8L830.0,302.5L830.5,286.3L831.0,301.8L831.5,284.6L832.0,301.9L832.5,286.3L833.0,301.9L833.5,283.2L834.0,304.7L834.5,287.9L835.0,305.8L835.5,284.1L836.0,301.4L836.5,286.6L837.0,304.0L837.5,289.1L838.0,302.8L838.5,288.5L839.0,302.1L839.5,289.2L840.0,303.6L840.5,289.4L841.0,302.4L841.5,289.6L842.0,302.4L842.5,289.0L843.0,302.7L843.5,285.0L844.0,301.9L844.5,285.5L845.0,301.7L845.5,289.5L846.0,302.3L846.5,288.3L847.0,302.2L847.5,289.1L848.0,304.0L848.5,288.0L849.0,301.2L849.5,288.4L850.0,302.0L850.5,287.7L851.0,305.5L851.5,288.3L852.0,303.9L852.5,288.5L853.0,305.3L853.5,286.4L854.0,305.0L854.5,287.0L855.0,302.3L855.5,286.5L856.0,301.5L856.5,288.4L857.0,307.9L857.5,288.6L858.0,304.3L858.5,288.0L859.0,302.7L859.5,286.0L860.0,303.8L860.5,286.1L861.0,303.5L861.5,287.8L862.0,302.3L862.5,290.0L863.0,302.5L863.5,288.6L864.0,302.4L864.5,287.5L865.0,301.1L865.5,287.2L866.0,303.9" fill="none" stroke="#0072bd" stroke-width="2" stroke-linejoin="round"/>
<line x1="370.0" y1="204.2" x2="866.1" y2="204.2" stroke="#000" stroke-width="2.4"/>
<line x1="370.0" y1="386.9" x2="866.1" y2="386.9" stroke="#000" stroke-width="2.4"/>
<g font-family="Liberation Sans, sans-serif" font-size="11" fill="#262626">
<text x="364" y="193.0" text-anchor="end">1.06</text>
<text x="364" y="228.0" text-anchor="end">1.04</text>
<text x="364" y="264.0" text-anchor="end">1.02</text>
<text x="364" y="300.0" text-anchor="end">1</text>
<text x="364" y="336.0" text-anchor="end">0.98</text>
<text x="364" y="372.0" text-anchor="end">0.96</text>
<text x="364" y="407.0" text-anchor="end">0.94</text>
<text x="370.5" y="420.0" text-anchor="middle">0</text>
<text x="439.2" y="420.0" text-anchor="middle">1000</text>
<text x="508.0" y="420.0" text-anchor="middle">2000</text>
<text x="576.8" y="420.0" text-anchor="middle">3000</text>
<text x="645.5" y="420.0" text-anchor="middle">4000</text>
<text x="714.2" y="420.0" text-anchor="middle">5000</text>
<text x="783.0" y="420.0" text-anchor="middle">6000</text>
<text x="851.8" y="420.0" text-anchor="middle">7000</text>
<text x="644.5" y="176.3" text-anchor="middle" fill="#000">boilerpressure_demo/Drum pressure constraint</text>
<text x="644.5" y="433.8" text-anchor="middle" fill="#000">Time (seconds)</text>
<text transform="translate(337,295.5) rotate(-90)" text-anchor="middle" fill="#000">Amplitude</text>
</g>
<rect x="910.3" y="412.1" width="3.6" height="1" fill="#222"/>
<rect x="916.2" y="412.1" width="3.6" height="1" fill="#222"/>
<rect x="922.1" y="412.1" width="3.6" height="1" fill="#222"/>
<rect x="928.0" y="412.1" width="3.6" height="1" fill="#222"/>
<rect x="370.5" y="505.5" width="550.0" height="214.0" fill="#fff"/>
<line x1="439.50" y1="505.5" x2="439.50" y2="719.5" stroke="#e2e2e2" stroke-width="1"/>
<line x1="508.50" y1="505.5" x2="508.50" y2="719.5" stroke="#e2e2e2" stroke-width="1"/>
<line x1="576.50" y1="505.5" x2="576.50" y2="719.5" stroke="#e2e2e2" stroke-width="1"/>
<line x1="645.50" y1="505.5" x2="645.50" y2="719.5" stroke="#e2e2e2" stroke-width="1"/>
<line x1="714.50" y1="505.5" x2="714.50" y2="719.5" stroke="#e2e2e2" stroke-width="1"/>
<line x1="783.50" y1="505.5" x2="783.50" y2="719.5" stroke="#e2e2e2" stroke-width="1"/>
<line x1="851.50" y1="505.5" x2="851.50" y2="719.5" stroke="#e2e2e2" stroke-width="1"/>
<line x1="370.5" y1="558.5" x2="920.5" y2="558.5" stroke="#e2e2e2" stroke-width="1"/>
<line x1="370.5" y1="612.5" x2="920.5" y2="612.5" stroke="#e2e2e2" stroke-width="1"/>
<line x1="370.5" y1="665.5" x2="920.5" y2="665.5" stroke="#e2e2e2" stroke-width="1"/>
<rect x="370.5" y="505.5" width="550.0" height="214.0" fill="none" stroke="#000" stroke-width="1"/>
<line x1="439.25" y1="719.5" x2="439.25" y2="714.5" stroke="#000"/>
<line x1="439.25" y1="505.5" x2="439.25" y2="510.5" stroke="#000"/>
<line x1="508.00" y1="719.5" x2="508.00" y2="714.5" stroke="#000"/>
<line x1="508.00" y1="505.5" x2="508.00" y2="510.5" stroke="#000"/>
<line x1="576.75" y1="719.5" x2="576.75" y2="714.5" stroke="#000"/>
<line x1="576.75" y1="505.5" x2="576.75" y2="510.5" stroke="#000"/>
<line x1="645.50" y1="719.5" x2="645.50" y2="714.5" stroke="#000"/>
<line x1="645.50" y1="505.5" x2="645.50" y2="510.5" stroke="#000"/>
<line x1="714.25" y1="719.5" x2="714.25" y2="714.5" stroke="#000"/>
<line x1="714.25" y1="505.5" x2="714.25" y2="510.5" stroke="#000"/>
<line x1="783.00" y1="719.5" x2="783.00" y2="714.5" stroke="#000"/>
<line x1="783.00" y1="505.5" x2="783.00" y2="510.5" stroke="#000"/>
<line x1="851.75" y1="719.5" x2="851.75" y2="714.5" stroke="#000"/>
<line x1="851.75" y1="505.5" x2="851.75" y2="510.5" stroke="#000"/>
<line x1="370.5" y1="558.5" x2="376.0" y2="558.5" stroke="#000"/>
<line x1="920.5" y1="558.5" x2="915.0" y2="558.5" stroke="#000"/>
<line x1="370.5" y1="612.5" x2="376.0" y2="612.5" stroke="#000"/>
<line x1="920.5" y1="612.5" x2="915.0" y2="612.5" stroke="#000"/>
<line x1="370.5" y1="665.5" x2="376.0" y2="665.5" stroke="#000"/>
<line x1="920.5" y1="665.5" x2="915.0" y2="665.5" stroke="#000"/>
<path d="M370.5,607.1L371.3,593.4L372.1,573.0L372.9,607.5L373.6,643.1L374.2,648.3L374.8,648.7L375.4,651.9L376.0,662.6L376.6,666.7L377.2,659.6L377.9,667.4L377.9,594.5L378.5,602.6L379.1,608.0L379.8,603.4L380.4,615.2L381.0,615.6L381.7,625.3L382.3,628.3L382.9,639.6L383.6,640.3L384.3,609.9L385.0,583.0L385.6,586.2L386.3,598.6L386.9,603.8L387.5,612.6L388.2,628.4L388.8,627.4L389.4,637.5L390.1,649.2L390.7,654.6L391.4,639.8L392.1,608.4L392.9,592.7L393.6,571.6L394.3,584.5L395.0,598.2L395.7,616.0L396.4,634.5L397.0,636.5L397.7,650.6L398.3,652.7L398.9,664.7L399.5,665.7L400.1,673.8L400.7,686.1L400.7,583.0L401.3,600.8L401.9,613.0L402.6,624.7L403.2,627.7L403.8,647.2L404.4,657.4L405.0,671.7L405.7,682.7L406.4,688.5L407.1,698.5L407.9,705.5L407.9,574.4L408.5,591.9L409.1,604.4L409.7,620.0L410.3,631.4L410.9,649.8L411.5,662.1L412.1,683.2L412.1,550.1L412.8,549.4L413.4,551.5L414.0,559.5L414.6,569.9L415.2,564.9L415.8,567.4L416.4,577.3L417.1,603.6L417.9,640.3L418.5,620.5L419.1,599.7L419.7,587.3L420.3,560.4L420.9,544.8L421.5,529.7L422.1,508.0L422.9,515.9L423.6,508.0L424.3,508.6L425.0,517.2L425.7,594.7L426.4,661.7L427.1,622.1L427.8,591.3L428.4,554.4L429.0,571.3L429.7,581.8L430.3,588.1L430.9,599.2L431.5,622.3L432.1,628.8L432.9,605.9L433.6,585.9L434.3,610.3L434.9,620.3L435.6,643.9L436.3,655.4L437.0,678.9L437.6,655.3L438.2,644.0L438.9,620.3L439.5,611.7L440.1,597.3L440.7,574.4L441.4,603.2L442.1,634.5L442.8,632.0L443.4,621.2L444.0,609.9L444.6,598.8L445.2,596.0L445.8,588.9L446.4,569.7L447.0,565.8L447.6,583.7L448.2,590.9L448.9,607.2L449.5,629.4L450.1,643.9L450.7,658.9L450.7,585.9L451.3,591.0L452.0,594.8L452.6,600.9L453.3,606.7L453.9,611.4L454.5,612.6L455.2,623.6L455.8,630.0L456.4,634.5L456.4,544.4L457.1,544.7L457.7,554.2L458.4,556.6L459.0,551.1L459.6,560.2L460.3,563.1L460.9,573.2L461.6,570.1L462.2,598.4L462.9,623.5L463.6,651.7L464.2,644.5L464.8,623.5L465.4,609.9L466.0,603.9L466.7,583.3L467.3,571.6L467.9,573.8L468.5,572.8L469.1,578.8L469.7,576.1L470.3,577.4L470.9,588.4L471.5,589.7L472.1,585.9L473.0,663.2L473.6,644.5L474.2,624.5L474.8,617.3L475.4,598.3L476.1,580.2L476.7,567.3L477.3,548.7L478.0,579.0L478.6,608.3L479.3,634.5L480.0,623.3L480.7,607.5L481.4,598.4L482.1,583.0L482.8,581.9L483.4,574.1L484.1,581.0L484.7,571.4L485.4,566.6L486.0,569.3L486.6,567.8L487.3,561.5L487.9,633.1L488.5,620.8L489.1,619.7L489.7,612.0L490.3,600.4L490.9,588.6L491.5,587.9L492.1,574.4L492.9,597.5L493.6,618.1L494.3,632.4L495.0,657.4L495.0,656.0L495.9,540.1L496.4,540.1L497.1,564.5L497.9,582.7L498.6,615.2L499.3,634.5L499.3,550.1L499.9,567.3L500.5,578.4L501.1,590.5L501.7,611.2L502.3,629.3L503.0,645.7L503.6,656.0L503.6,580.1L504.2,580.4L504.8,585.4L505.5,578.1L506.1,578.3L506.7,587.4L507.4,586.8L508.0,580.6L508.7,583.4L509.3,585.9L510.0,618.4L510.7,658.9L511.3,647.8L511.9,637.4L512.6,622.3L513.2,602.7L513.8,596.4L514.4,582.3L515.0,567.3L515.7,612.7L516.4,656.0L517.1,639.5L517.9,622.1L518.6,598.0L519.3,585.9L520.0,611.8L520.7,628.8L521.4,617.6L522.1,588.0L522.9,571.3L523.6,558.7L524.3,580.1L525.0,614.9L525.7,636.0L526.4,669.4L527.0,583.0L527.6,585.1L528.2,601.8L528.9,602.7L529.5,609.2L530.1,619.1L530.7,628.8L530.7,567.3L531.3,575.6L532.0,587.1L532.6,595.1L533.3,605.1L533.9,615.7L534.5,617.6L535.2,630.1L535.8,632.0L536.4,644.5L536.4,585.9L537.0,599.9L537.7,597.0L538.3,607.9L538.9,613.1L539.5,621.7L540.1,629.8L540.7,643.1L541.4,593.5L542.1,545.8L542.9,573.5L543.6,585.6L544.3,614.4L545.0,631.7L545.7,611.3L546.4,585.9L547.0,594.5L547.6,607.0L548.2,619.2L548.9,623.2L549.5,638.1L550.1,652.3L550.7,664.2L551.3,671.7L552.1,588.7L552.8,591.0L553.4,602.9L554.0,606.0L554.6,618.4L555.2,627.4L555.8,630.0L556.4,637.4L557.3,570.1L558.0,592.0L558.7,626.2L559.3,644.2L560.0,668.4L560.7,699.8L561.4,664.4L562.1,632.7L562.9,611.7L563.6,573.8L564.4,674.6L565.1,663.2L565.8,650.5L566.5,651.2L567.2,638.6L567.9,625.9L567.9,585.9L568.5,596.6L569.1,601.1L569.7,610.2L570.3,617.3L570.9,621.2L571.5,638.9L572.1,640.3L572.9,613.3L573.7,579.8L574.4,542.4L575.0,560.5L575.6,574.5L576.2,576.2L576.9,591.0L577.5,614.2L578.1,622.2L578.7,637.9L579.3,648.8L579.9,550.1L580.5,566.1L581.1,579.2L581.7,589.0L582.3,603.4L583.0,619.9L583.6,631.7L583.6,583.0L584.3,584.5L585.0,580.2L585.7,580.3L586.4,573.0L587.1,593.7L587.9,613.1L588.6,638.9L589.3,658.9L590.0,647.4L590.7,629.4L591.4,610.0L592.1,591.6L592.9,606.0L593.6,619.4L594.3,640.4L595.0,654.6L595.6,640.9L596.2,633.4L596.8,626.0L597.4,616.9L598.1,605.5L598.7,593.1L599.3,585.9L600.0,601.2L600.7,612.0L601.4,629.3L602.1,643.1L602.8,636.6L603.4,623.0L604.0,611.2L604.6,609.4L605.2,595.0L605.8,585.2L606.4,574.4L607.1,585.3L607.9,600.3L608.6,623.3L609.3,637.4L610.0,617.7L610.7,604.5L611.3,596.6L612.0,579.5L612.7,564.4L613.3,580.9L614.0,583.8L614.6,597.4L615.2,606.2L615.8,619.1L616.4,634.5L617.3,555.8L618.0,559.7L618.7,564.8L619.3,573.0L620.0,584.9L620.7,585.9L621.4,613.4L622.1,643.1L622.8,639.7L623.4,628.1L624.0,610.1L624.6,609.7L625.2,599.3L625.8,589.4L626.4,574.4L626.4,574.4L627.1,623.2L627.9,681.8L628.4,681.8L629.2,655.8L630.0,627.8L630.7,591.6L631.4,610.1L632.1,637.4L632.8,634.5L633.4,617.4L634.0,611.9L634.6,602.0L635.2,592.7L635.8,589.8L636.4,583.0L637.1,625.3L637.9,675.2L638.5,675.3L639.1,660.1L639.7,657.6L640.3,649.2L640.9,651.2L641.5,637.1L642.1,634.5L642.1,585.9L642.8,589.3L643.4,609.5L644.0,615.1L644.6,621.0L645.2,626.6L645.8,643.2L646.4,648.8L647.3,580.1L648.0,594.0L648.7,602.8L649.3,607.8L650.0,615.8L650.7,628.8L651.4,593.2L652.1,554.9L652.9,583.3L653.6,609.7L654.3,637.0L655.0,661.7L655.9,583.0L656.5,589.4L657.1,599.1L657.7,599.1L658.3,598.4L658.9,611.0L659.5,612.0L660.1,624.9L660.7,625.9L660.7,560.1L661.3,567.5L661.9,576.4L662.6,587.3L663.2,599.1L663.8,609.4L664.4,617.2L665.0,628.8L665.0,583.0L665.6,590.4L666.2,612.4L666.8,625.6L667.4,629.7L668.1,640.0L668.7,657.6L669.3,670.3L670.0,633.1L670.7,594.5L671.3,673.2L671.9,663.9L672.5,664.3L673.1,656.8L673.8,651.3L674.4,639.9L675.0,634.5L675.0,555.8L675.6,559.9L676.2,562.6L676.9,558.4L677.5,556.7L678.1,566.8L678.7,565.8L679.3,643.1L680.0,616.5L680.7,596.3L681.4,566.7L682.1,547.2L682.9,585.5L683.6,625.9L684.3,607.5L685.0,583.0L685.7,576.0L686.4,567.9L687.1,551.5L687.7,542.1L688.4,530.0L689.3,643.1L690.0,608.7L690.8,567.6L691.6,527.2L692.3,543.4L693.0,551.6L693.7,573.6L694.4,583.0L695.0,654.6L695.6,639.3L696.2,636.8L696.8,626.3L697.4,619.0L698.1,605.3L698.7,596.5L699.3,591.6L700.0,625.2L700.7,660.3L701.4,639.1L702.1,614.5L702.9,591.3L703.6,574.4L704.3,600.7L705.0,621.5L705.7,643.6L706.4,674.6L707.1,668.6L707.9,665.2L708.6,658.7L709.3,648.8L709.3,588.7L709.9,598.8L710.5,612.2L711.1,621.5L711.8,635.7L712.4,656.4L713.0,666.0L713.6,577.3L714.3,596.3L715.0,610.4L715.7,626.4L716.4,637.4L717.1,596.4L717.9,560.7L718.6,555.4L719.4,554.2L720.1,558.7L720.8,591.9L721.5,614.1L722.1,648.8L722.9,619.7L723.6,585.9L724.2,583.7L724.8,576.7L725.4,581.9L726.0,578.7L726.7,566.1L727.3,567.3L727.9,643.1L728.5,638.0L729.1,629.4L729.7,618.8L730.3,609.8L730.9,610.6L731.5,598.6L732.1,588.7L732.9,618.2L733.6,646.0L734.2,635.9L734.8,629.3L735.4,614.2L736.0,599.2L736.6,596.3L737.2,584.1L737.9,574.4L738.6,607.9L739.3,631.7L739.9,626.2L740.5,612.8L741.1,611.5L741.7,593.2L742.3,584.5L743.0,586.5L743.6,573.0L744.3,605.2L745.0,648.8L745.7,620.4L746.4,588.7L747.2,610.5L748.0,636.0L748.7,664.6L749.4,636.2L750.0,600.3L750.7,571.6L751.4,588.9L752.1,606.3L752.9,632.5L753.6,648.8L754.3,645.6L755.0,642.9L755.7,646.6L756.4,648.8L756.4,568.7L756.4,568.7L757.0,569.0L757.7,575.3L758.3,571.2L758.9,573.9L759.5,570.0L760.1,571.3L760.7,574.4L761.3,684.6L761.9,675.9L762.5,673.0L763.1,659.1L763.8,651.5L764.4,649.4L765.0,637.4L765.0,583.0L765.6,589.9L766.2,604.9L766.9,623.6L767.5,625.2L768.1,647.2L768.7,654.6L769.3,591.6L770.0,615.6L770.7,632.4L771.4,655.8L772.1,678.9L772.9,653.5L773.6,627.6L774.3,605.4L775.0,580.1L775.7,608.3L776.4,631.7L777.1,623.7L777.9,612.9L778.6,592.4L779.3,583.0L780.0,596.2L780.7,615.4L781.4,629.3L782.1,648.8L782.9,620.6L783.6,588.7L784.3,603.2L785.0,613.1L785.7,618.3L786.4,634.5L787.0,565.8L787.6,584.6L788.2,591.5L788.9,607.7L789.5,613.9L790.1,632.1L790.7,643.1L791.3,558.7L791.9,566.3L792.5,570.8L793.2,574.5L793.8,576.9L794.4,585.9L795.0,664.6L795.7,668.3L796.4,663.7L797.1,674.9L797.9,671.7L797.9,594.5L798.5,606.8L799.1,618.4L799.7,627.6L800.3,628.5L800.9,638.6L801.5,654.9L802.1,660.3L802.1,585.9L802.8,597.2L803.4,601.7L804.0,604.8L804.6,611.3L805.2,619.5L805.8,628.8L806.4,637.4L807.2,619.0L808.0,592.9L808.7,568.7L809.4,588.4L810.1,599.8L810.8,615.0L811.5,635.5L812.1,647.4L812.1,591.6L812.8,600.5L813.4,599.4L814.0,614.8L814.6,610.6L815.2,615.2L815.8,620.2L816.4,631.7L816.4,583.0L817.0,580.0L817.7,573.3L818.3,568.4L818.9,563.3L819.5,554.4L820.1,553.6L820.7,551.5L821.4,597.0L822.1,637.4L822.8,598.2L823.5,568.5L824.1,533.8L824.9,570.8L825.7,607.6L826.4,648.8L826.4,583.0L827.0,600.4L827.7,601.6L828.3,614.0L828.9,627.3L829.5,637.9L830.1,649.8L830.7,660.3L830.7,577.3L831.3,595.5L831.9,605.5L832.6,626.2L833.2,634.5L833.8,647.0L834.4,663.9L835.0,677.5L835.0,594.5L835.7,610.1L836.4,621.5L837.1,638.8L837.9,660.3L838.6,643.5L839.3,613.6L840.0,594.3L840.7,574.4L841.6,680.9L842.3,679.1L842.9,667.6L843.6,661.7L844.3,656.1L845.0,643.1L845.0,573.0L845.6,583.7L846.2,590.0L846.8,609.0L847.4,613.2L848.1,626.7L848.7,645.2L849.3,651.7L849.3,571.6L849.9,575.1L850.5,586.6L851.1,590.6L851.7,601.5L852.3,609.4L853.0,622.6L853.6,628.8L853.6,557.2L854.2,550.7L854.8,546.4L855.4,544.7L856.0,547.6L856.7,540.8L857.3,541.5L857.9,648.8L858.6,628.0L859.4,611.9L860.1,585.9L860.8,617.5L861.5,642.8L862.1,663.2L862.9,639.8L863.7,613.1L864.4,581.6L865.0,678.9L866.1,623.2L866.1,612.5L370.5,612.5Z" fill="#000" stroke="#000" stroke-width="0.9" stroke-linejoin="round"/>
<path d="M370.5,597.0L371.2,624.6L371.9,600.3L372.1,575.0L372.6,628.9L373.3,600.6L373.6,641.6L374.0,594.7L374.7,631.0L375.4,601.6L376.1,645.5L376.8,597.9L377.5,631.5L377.9,664.7L377.9,595.4L378.2,645.1L378.9,606.7L379.6,639.4L380.3,596.2L381.0,645.3L381.7,596.4L382.4,638.5L383.1,602.3L383.6,638.9L383.8,603.1L384.5,629.1L385.0,584.5L385.2,627.1L385.9,599.3L386.6,631.2L387.3,588.5L388.0,641.0L388.7,583.4L389.4,628.1L390.1,581.5L390.7,652.5L390.8,588.4L391.5,629.2L392.2,587.2L392.9,623.2L393.6,573.6L393.6,639.2L394.3,586.5L395.0,622.2L395.7,589.6L396.4,620.9L396.4,633.4L397.1,601.5L397.8,631.3L398.5,584.8L399.2,658.0L399.9,602.6L400.6,637.3L400.7,682.4L400.7,584.5L401.3,642.8L402.0,601.2L402.7,653.8L403.4,588.2L404.1,641.1L404.8,595.5L405.0,668.8L405.5,592.6L406.2,655.3L406.9,591.0L407.6,668.2L407.9,700.9L407.9,576.3L408.3,645.4L409.0,584.5L409.7,636.8L410.4,581.7L411.1,648.9L411.8,590.7L412.1,679.7L412.1,553.2L412.5,643.9L413.2,585.8L413.9,650.0L414.6,600.1L415.3,650.3L416.0,596.8L416.4,579.0L416.7,628.9L417.4,595.8L417.9,638.9L418.1,584.6L418.8,625.3L419.5,588.7L420.2,633.8L420.9,581.0L421.6,628.5L422.1,513.2L422.3,629.7L423.0,576.8L423.7,628.6L424.4,560.5L425.0,521.9L425.1,630.3L425.8,561.7L426.4,659.3L426.5,569.7L427.2,626.3L427.9,587.1L428.4,557.3L428.6,639.1L429.3,593.3L430.0,631.0L430.7,592.2L431.4,620.2L432.1,596.2L432.1,628.0L432.8,597.9L433.5,625.5L433.6,587.2L434.2,627.6L434.9,593.0L435.6,657.7L436.3,590.5L437.0,675.6L437.0,599.1L437.7,659.1L438.4,593.3L439.1,633.3L439.8,601.5L440.5,627.6L440.7,576.3L441.2,623.7L441.9,586.3L442.1,633.4L442.6,579.1L443.3,628.6L444.0,586.8L444.7,624.2L445.4,589.2L446.1,636.9L446.8,591.7L447.0,568.2L447.5,636.9L448.2,585.8L448.9,625.5L449.6,590.1L450.3,638.9L450.7,656.5L450.7,587.2L451.0,644.1L451.7,600.3L452.4,641.5L453.1,597.2L453.8,629.0L454.5,588.0L455.2,621.7L455.9,596.6L456.4,633.4L456.4,547.8L456.6,618.7L457.3,565.9L458.0,623.2L458.7,589.9L459.4,627.4L460.1,590.6L460.8,623.4L461.5,592.3L461.6,572.2L462.2,628.1L462.9,601.6L463.6,649.7L463.6,592.1L464.3,631.9L465.0,588.4L465.7,631.2L466.4,587.1L467.1,638.5L467.3,573.6L467.8,629.0L468.5,589.5L469.2,630.4L469.9,589.0L470.6,635.0L471.3,591.5L472.0,635.3L472.1,587.2L472.7,642.8L473.0,660.6L473.4,584.8L474.1,640.0L474.8,585.0L475.5,631.7L476.2,595.9L476.9,623.3L477.3,551.8L477.6,620.5L478.3,590.2L479.0,626.1L479.3,633.4L479.7,582.1L480.4,627.0L481.1,590.6L481.8,620.0L482.1,584.5L482.5,624.7L483.2,599.2L483.9,629.9L484.6,597.6L485.3,627.8L486.0,599.1L486.7,623.8L487.3,564.1L487.4,622.4L487.9,632.1L488.1,593.1L488.8,623.2L489.5,594.1L490.2,627.4L490.9,598.3L491.6,635.6L492.1,576.3L492.3,632.4L493.0,586.2L493.7,629.8L494.4,579.0L495.0,653.8L495.0,653.8L495.1,577.0L495.8,639.2L495.9,543.7L496.4,543.7L496.5,625.8L497.2,576.7L497.9,622.2L498.6,562.3L499.3,633.4L499.3,553.2L499.3,624.8L500.0,572.8L500.7,623.5L501.4,600.2L502.1,628.1L502.8,599.1L503.5,639.1L503.6,653.8L503.6,581.8L504.2,643.5L504.9,596.6L505.6,641.1L506.3,595.9L507.0,639.3L507.7,597.7L508.4,648.4L509.1,601.6L509.3,587.2L509.8,639.6L510.5,587.8L510.7,656.5L511.2,597.4L511.9,627.3L512.6,590.0L513.3,646.4L514.0,584.8L514.7,632.2L515.0,569.5L515.4,628.0L516.1,588.3L516.4,653.8L516.8,599.3L517.5,635.3L518.2,603.0L518.9,626.3L519.3,587.2L519.6,624.2L520.3,597.2L520.7,628.0L521.0,599.4L521.7,624.9L522.4,581.7L523.1,624.6L523.6,561.4L523.8,632.7L524.5,581.4L525.2,641.8L525.9,586.3L526.4,666.6L526.6,592.5L527.0,584.5L527.3,645.3L528.0,601.4L528.7,629.1L529.4,587.5L530.1,621.1L530.7,628.0L530.7,569.5L530.8,622.6L531.5,583.3L532.2,620.3L532.9,597.5L533.6,627.4L534.3,593.3L535.0,626.6L535.7,602.5L536.4,630.4L536.4,642.9L536.4,587.2L537.1,629.5L537.8,595.6L538.5,625.4L539.2,594.6L539.9,623.9L540.6,583.9L540.7,641.6L541.3,584.1L542.0,630.1L542.1,549.1L542.7,629.5L543.4,594.0L544.1,618.0L544.8,585.6L545.0,630.7L545.5,601.3L546.2,628.1L546.4,587.2L546.9,633.2L547.6,603.7L548.3,626.9L549.0,598.9L549.7,628.9L550.4,603.7L551.1,655.8L551.3,668.8L551.8,599.6L552.1,589.9L552.5,641.4L553.2,589.2L553.9,631.1L554.6,593.4L555.3,633.9L556.0,589.3L556.4,636.1L556.7,592.1L557.3,572.2L557.4,632.1L558.1,592.8L558.8,638.5L559.5,593.0L560.2,671.7L560.7,695.4L560.9,596.2L561.6,661.5L562.3,597.1L563.0,633.8L563.6,575.8L563.7,662.0L564.4,588.5L564.4,671.5L565.1,600.6L565.8,638.5L566.5,591.5L567.2,623.7L567.9,625.3L567.9,587.2L567.9,623.8L568.6,594.7L569.3,623.0L570.0,600.4L570.7,620.2L571.4,590.6L572.1,627.4L572.1,638.9L572.8,580.7L573.5,626.0L574.2,580.1L574.4,545.9L574.9,633.1L575.6,579.6L576.3,627.7L577.0,585.1L577.7,621.5L578.4,586.2L579.1,623.4L579.3,647.0L579.8,591.4L579.9,553.2L580.5,622.1L581.2,600.0L581.9,623.4L582.6,605.1L583.3,620.8L583.6,630.7L583.6,584.5L584.0,619.4L584.7,599.9L585.4,631.9L586.1,603.1L586.4,575.0L586.8,623.2L587.5,597.9L588.2,622.1L588.9,599.3L589.3,656.5L589.6,596.7L590.3,632.3L591.0,603.1L591.7,640.8L592.1,592.6L592.4,627.2L593.1,595.3L593.8,626.4L594.5,606.5L595.0,652.5L595.2,607.2L595.9,633.6L596.6,603.0L597.3,633.0L598.0,592.1L598.7,627.1L599.3,587.2L599.4,632.5L600.1,600.6L600.8,634.5L601.5,599.4L602.1,641.6L602.2,594.8L602.9,624.8L603.6,590.7L604.3,630.1L605.0,594.1L605.7,623.7L606.4,590.6L606.4,576.3L607.1,621.3L607.8,586.9L608.5,624.4L609.2,596.2L609.3,636.1L609.9,596.8L610.6,628.3L611.3,595.0L612.0,628.0L612.7,575.8L612.7,566.8L613.4,624.5L614.1,576.2L614.8,622.3L615.5,589.8L616.2,621.4L616.4,633.4L616.9,594.0L617.3,558.6L617.6,625.5L618.3,599.5L619.0,625.6L619.7,601.9L620.4,631.8L620.7,587.2L621.1,625.5L621.8,594.1L622.1,641.6L622.5,592.3L623.2,624.7L623.9,603.4L624.6,629.8L625.3,588.6L626.0,651.7L626.4,576.3L626.4,576.3L626.7,637.1L627.4,592.4L627.9,678.3L628.1,595.3L628.4,678.3L628.8,591.4L629.5,640.1L630.2,604.8L630.7,592.6L630.9,635.2L631.6,603.2L632.1,636.1L632.3,600.5L633.0,623.8L633.7,600.2L634.4,631.7L635.1,598.9L635.8,639.9L636.4,584.5L636.5,633.0L637.2,597.4L637.9,672.0L637.9,602.1L638.6,628.2L639.3,592.5L640.0,646.7L640.7,590.4L641.4,626.4L642.1,590.3L642.1,633.4L642.1,587.2L642.8,626.4L643.5,597.0L644.2,637.4L644.9,589.9L645.6,623.8L646.3,598.6L646.4,647.0L647.0,593.3L647.3,581.8L647.7,629.7L648.4,595.6L649.1,626.2L649.8,593.1L650.5,617.9L650.7,628.0L651.2,595.6L651.9,626.3L652.1,557.8L652.6,635.7L653.3,574.0L654.0,625.8L654.7,593.7L655.0,659.3L655.4,595.0L655.9,584.5L656.1,640.4L656.8,597.2L657.5,636.5L658.2,599.0L658.9,621.8L659.6,592.1L660.3,618.8L660.7,625.3L660.7,562.7L661.0,616.8L661.7,589.6L662.4,622.8L663.1,597.1L663.8,616.8L664.5,598.0L665.0,628.0L665.0,584.5L665.2,620.5L665.9,602.6L666.6,631.1L667.3,603.8L668.0,628.4L668.7,599.3L669.3,667.4L669.4,597.2L670.1,626.8L670.7,595.4L670.8,651.7L671.3,670.1L671.5,594.4L672.2,633.0L672.9,602.3L673.6,639.9L674.3,585.7L675.0,629.8L675.0,633.4L675.0,558.6L675.7,627.1L676.4,585.0L677.1,621.4L677.8,572.3L678.5,625.7L678.7,568.2L679.2,626.3L679.3,641.6L679.9,583.7L680.6,622.9L681.3,581.2L682.0,626.6L682.1,550.5L682.7,626.2L683.4,596.2L683.6,625.3L684.1,590.1L684.8,619.8L685.0,584.5L685.5,627.5L686.2,586.7L686.9,624.5L687.6,556.7L688.3,623.2L688.4,534.2L689.0,625.5L689.3,641.6L689.7,555.4L690.4,625.7L691.1,542.4L691.6,531.4L691.8,627.6L692.5,589.7L693.2,640.3L693.9,600.2L694.4,584.5L694.6,622.7L695.0,652.5L695.3,595.6L696.0,637.8L696.7,603.8L697.4,645.3L698.1,604.7L698.8,629.7L699.3,592.6L699.5,627.1L700.2,595.5L700.7,657.9L700.9,595.0L701.6,649.1L702.3,594.0L703.0,624.9L703.6,576.3L703.7,632.1L704.4,590.1L705.1,634.5L705.8,594.2L706.4,671.5L706.5,602.2L707.2,656.2L707.9,604.2L708.6,624.7L709.3,647.0L709.3,589.9L709.3,637.5L710.0,605.4L710.7,648.2L711.4,600.2L712.1,649.9L712.8,591.7L713.0,663.3L713.5,602.5L713.6,579.0L714.2,639.1L714.9,589.5L715.6,628.5L716.3,588.4L716.4,636.1L717.0,592.0L717.7,633.2L717.9,563.3L718.4,624.5L719.1,570.5L719.8,624.1L720.1,561.4L720.5,620.9L721.2,585.9L721.9,625.5L722.1,647.0L722.6,588.7L723.3,642.3L723.6,587.2L724.0,632.3L724.7,600.8L725.4,629.3L726.1,592.3L726.8,628.1L727.3,569.5L727.5,624.5L727.9,641.6L728.2,591.4L728.9,637.8L729.6,587.1L730.3,637.1L731.0,603.4L731.7,632.9L732.1,589.9L732.4,630.7L733.1,593.6L733.6,644.3L733.8,599.7L734.5,634.4L735.2,594.3L735.9,627.7L736.6,597.6L737.3,629.5L737.9,576.3L738.0,627.1L738.7,584.2L739.3,630.7L739.4,599.8L740.1,627.7L740.8,586.3L741.5,624.4L742.2,594.7L742.9,625.6L743.6,575.0L743.6,636.1L744.3,600.7L745.0,627.2L745.0,647.0L745.7,602.6L746.4,626.4L746.4,589.9L747.1,623.0L747.8,590.5L748.5,643.1L748.7,662.0L749.2,586.4L749.9,637.7L750.6,596.5L750.7,573.6L751.3,635.5L752.0,581.5L752.7,626.9L753.4,586.4L753.6,647.0L754.1,600.8L754.8,622.9L755.5,595.4L756.2,627.0L756.4,647.0L756.4,570.9L756.4,570.9L756.9,630.2L757.6,586.1L758.3,627.9L759.0,584.2L759.7,636.3L760.4,578.9L760.7,576.3L761.1,626.4L761.3,681.0L761.8,594.4L762.5,651.7L763.2,597.5L763.9,641.1L764.6,600.5L765.0,636.1L765.0,584.5L765.3,626.1L766.0,594.7L766.7,629.3L767.4,606.1L768.1,639.3L768.7,652.5L768.8,604.9L769.3,592.6L769.5,643.8L770.2,604.7L770.9,654.4L771.6,601.1L772.1,675.6L772.3,601.3L773.0,656.7L773.7,592.3L774.4,624.6L775.0,581.8L775.1,625.6L775.8,590.7L776.4,630.7L776.5,593.0L777.2,621.0L777.9,597.7L778.6,621.3L779.3,584.5L779.3,624.1L780.0,592.6L780.7,623.0L781.4,601.0L782.1,624.7L782.1,647.0L782.8,598.6L783.5,621.5L783.6,589.9L784.2,624.4L784.9,600.4L785.6,621.6L786.3,588.2L786.4,633.4L787.0,584.7L787.0,568.2L787.7,624.9L788.4,584.9L789.1,620.6L789.8,574.2L790.5,628.5L790.7,641.6L791.2,574.4L791.3,561.4L791.9,627.0L792.6,577.5L793.3,646.2L794.0,601.1L794.4,587.2L794.7,635.3L795.0,662.0L795.4,598.2L796.1,638.1L796.8,600.7L797.5,652.5L797.9,668.8L797.9,595.4L798.2,640.5L798.9,597.7L799.6,627.2L800.3,598.8L801.0,646.1L801.7,596.6L802.1,657.9L802.1,587.2L802.4,646.7L803.1,598.2L803.8,633.6L804.5,595.8L805.2,628.4L805.9,590.3L806.4,636.1L806.6,595.1L807.3,624.4L808.0,587.4L808.7,622.8L808.7,570.9L809.4,623.3L810.1,601.1L810.8,624.6L811.5,601.0L812.1,645.7L812.1,592.6L812.2,620.0L812.9,596.3L813.6,627.6L814.3,605.1L815.0,621.7L815.7,601.5L816.4,623.0L816.4,630.7L816.4,584.5L817.1,620.6L817.8,594.2L818.5,623.7L819.2,593.7L819.9,629.5L820.6,566.3L820.7,554.6L821.3,626.7L822.0,583.1L822.1,636.1L822.7,555.8L823.4,629.6L824.1,569.5L824.1,537.7L824.8,626.9L825.5,579.5L826.2,630.9L826.4,647.0L826.4,584.5L826.9,631.3L827.6,599.6L828.3,636.1L829.0,602.3L829.7,636.6L830.4,591.8L830.7,657.9L830.7,579.0L831.1,649.0L831.8,592.2L832.5,628.0L833.2,595.8L833.9,637.8L834.6,598.1L835.0,674.2L835.0,595.4L835.3,647.7L836.0,604.7L836.7,647.0L837.4,602.6L837.9,657.9L838.1,597.4L838.8,634.9L839.5,605.0L840.2,645.0L840.7,576.3L840.9,665.6L841.6,677.5L841.6,598.8L842.3,633.9L843.0,590.9L843.7,625.2L844.4,597.0L845.0,641.6L845.0,575.0L845.1,624.5L845.8,593.3L846.5,631.1L847.2,593.9L847.9,629.7L848.6,592.3L849.3,649.7L849.3,573.6L849.3,628.7L850.0,595.9L850.7,628.7L851.4,593.2L852.1,618.0L852.8,594.8L853.5,618.5L853.6,628.0L853.6,560.0L854.2,623.7L854.9,573.4L855.6,624.9L856.3,592.9L857.0,630.5L857.3,545.0L857.7,637.6L857.9,647.0L858.4,582.0L859.1,625.0L859.8,598.7L860.1,587.2L860.5,646.5L861.2,599.2L861.9,630.5L862.1,660.6L862.6,597.5L863.3,635.2L864.0,595.3L864.4,583.1L864.7,660.7L865.0,675.6L865.4,600.9L866.1,633.5" fill="none" stroke="#000" stroke-width="1" stroke-linejoin="bevel"/>
<path d="M370.5,605.0L371.0,620.8L371.5,601.6L372.0,619.0L372.5,605.3L373.0,623.6L373.5,596.5L374.0,621.5L374.5,604.8L375.0,621.3L375.5,605.9L376.0,621.0L376.5,603.7L377.0,623.1L377.5,602.5L378.0,621.7L378.5,603.4L379.0,624.7L379.5,602.8L380.0,622.3L380.5,603.6L381.0,622.4L381.5,602.5L382.0,624.3L382.5,598.1L383.0,623.2L383.5,605.1L384.0,619.8L384.5,601.4L385.0,621.5L385.5,600.8L386.0,620.1L386.5,604.1L387.0,618.6L387.5,604.1L388.0,621.1L388.5,605.6L389.0,623.8L389.5,600.2L390.0,619.0L390.5,603.5L391.0,619.0L391.5,602.8L392.0,619.6L392.5,605.9L393.0,621.5L393.5,605.9L394.0,622.0L394.5,602.5L395.0,623.8L395.5,601.7L396.0,620.6L396.5,603.1L397.0,620.1L397.5,600.9L398.0,624.4L398.5,600.6L399.0,621.4L399.5,601.7L400.0,627.4L400.5,602.5L401.0,624.1L401.5,601.0L402.0,622.3L402.5,598.3L403.0,622.9L403.5,598.7L404.0,623.7L404.5,599.7L405.0,631.0L405.5,599.1L406.0,627.6L406.5,599.9L407.0,627.1L407.5,602.3L408.0,624.1L408.5,603.6L409.0,622.9L409.5,601.5L410.0,624.2L410.5,602.4L411.0,623.3L411.5,602.1L412.0,621.5L412.5,604.8L413.0,620.5L413.5,603.2L414.0,622.1L414.5,602.5L415.0,622.5L415.5,600.6L416.0,622.8L416.5,594.5L417.0,622.2L417.5,600.2L418.0,622.6L418.5,602.3L419.0,623.2L419.5,600.4L420.0,622.8L420.5,601.1L421.0,630.8L421.5,603.5L422.0,630.8L422.5,594.0L423.0,625.5L423.5,602.3L424.0,627.2L424.5,597.1L425.0,629.4L425.5,594.0L426.0,625.8L426.5,601.3L427.0,621.0L427.5,604.6L428.0,620.0L428.5,603.0L429.0,619.6L429.5,602.4L430.0,619.5L430.5,605.1L431.0,621.5L431.5,603.7L432.0,621.6L432.5,601.5L433.0,621.9L433.5,603.3L434.0,623.7L434.5,603.6L435.0,624.9L435.5,601.4L436.0,620.4L436.5,601.9L437.0,621.1L437.5,606.0L438.0,621.8L438.5,605.5L439.0,621.7L439.5,602.2L440.0,627.1L440.5,605.9L441.0,622.5L441.5,604.2L442.0,624.3L442.5,601.2L443.0,624.8L443.5,604.2L444.0,623.4L444.5,602.3L445.0,619.7L445.5,602.4L446.0,620.7L446.5,604.7L447.0,621.4L447.5,601.1L448.0,625.0L448.5,597.0L449.0,625.0L449.5,601.6L450.0,625.3L450.5,601.2L451.0,621.5L451.5,599.5L452.0,621.8L452.5,602.3L453.0,624.5L453.5,604.3L454.0,621.5L454.5,599.4L455.0,625.0L455.5,605.4L456.0,623.4L456.5,597.7L457.0,620.3L457.5,600.4L458.0,621.8L458.5,603.2L459.0,623.2L459.5,601.5L460.0,621.1L460.5,602.3L461.0,622.0L461.5,602.4L462.0,622.5L462.5,602.3L463.0,626.3L463.5,605.2L464.0,620.6L464.5,603.5L465.0,619.3L465.5,603.5L466.0,624.8L466.5,602.5L467.0,619.7L467.5,602.5L468.0,620.3L468.5,602.9L469.0,619.9L469.5,601.4L470.0,620.3L470.5,601.7L471.0,622.8L471.5,602.2L472.0,621.4L472.5,600.6L473.0,622.9L473.5,600.4L474.0,624.1L474.5,604.5L475.0,624.3L475.5,604.9L476.0,625.5L476.5,602.4L477.0,624.9L477.5,601.4L478.0,622.2L478.5,601.0L479.0,619.3L479.5,603.6L480.0,624.2L480.5,604.6L481.0,620.2L481.5,602.9L482.0,622.0L482.5,603.9L483.0,624.2L483.5,604.9L484.0,627.4L484.5,599.6L485.0,620.2L485.5,602.5L486.0,621.5L486.5,595.5L487.0,622.4L487.5,605.1L488.0,629.9L488.5,604.2L489.0,624.9L489.5,601.2L490.0,626.8L490.5,599.2L491.0,623.1L491.5,601.4L492.0,623.3L492.5,603.3L493.0,618.6L493.5,602.9L494.0,619.5L494.5,601.3L495.0,620.8L495.5,604.5L496.0,624.1L496.5,603.1L497.0,626.8L497.5,601.4L498.0,622.2L498.5,598.3L499.0,620.9L499.5,601.8L500.0,623.9L500.5,599.2L501.0,624.8L501.5,602.5L502.0,621.2L502.5,601.4L503.0,620.9L503.5,604.8L504.0,628.0L504.5,600.9L505.0,622.6L505.5,602.1L506.0,624.0L506.5,602.1L507.0,621.2L507.5,602.9L508.0,621.0L508.5,606.4L509.0,619.7L509.5,603.2L510.0,619.0L510.5,601.5L511.0,620.8L511.5,602.4L512.0,620.3L512.5,601.1L513.0,622.0L513.5,602.7L514.0,620.9L514.5,602.6L515.0,627.6L515.5,601.2L516.0,626.9L516.5,600.8L517.0,623.1L517.5,605.8L518.0,622.6L518.5,605.0L519.0,620.6L519.5,604.8L520.0,621.6L520.5,605.4L521.0,619.4L521.5,605.1L522.0,621.7L522.5,604.4L523.0,621.4L523.5,600.3L524.0,620.4L524.5,603.0L525.0,622.8L525.5,604.0L526.0,624.8L526.5,600.6L527.0,627.6L527.5,601.9L528.0,623.5L528.5,600.6L529.0,629.1L529.5,603.4L530.0,629.0L530.5,602.7L531.0,625.6L531.5,599.4L532.0,622.1L532.5,601.6L533.0,624.9L533.5,594.0L534.0,622.8L534.5,599.6L535.0,623.9L535.5,597.3L536.0,622.0L536.5,602.7L537.0,621.1L537.5,604.3L538.0,619.5L538.5,606.4L539.0,620.1L539.5,603.8L540.0,625.0L540.5,603.2L541.0,622.7L541.5,606.1L542.0,620.4L542.5,602.2L543.0,625.8L543.5,602.4L544.0,620.8L544.5,605.6L545.0,621.2L545.5,605.1L546.0,622.2L546.5,606.0L547.0,621.5L547.5,602.6L548.0,620.0L548.5,602.5L549.0,620.9L549.5,603.6L550.0,623.7L550.5,605.0L551.0,622.9L551.5,603.5L552.0,620.7L552.5,601.8L553.0,623.1L553.5,599.3L554.0,624.6L554.5,595.2L555.0,624.1L555.5,602.6L556.0,623.6L556.5,604.0L557.0,624.8L557.5,603.6L558.0,631.0L558.5,603.7L559.0,625.5L559.5,598.9L560.0,623.1L560.5,603.2L561.0,625.6L561.5,598.5L562.0,629.5L562.5,598.8L563.0,625.1L563.5,602.6L564.0,621.3L564.5,594.0L565.0,626.6L565.5,601.2L566.0,626.8L566.5,600.3L567.0,628.3L567.5,600.3L568.0,622.4L568.5,603.6L569.0,621.2L569.5,601.4L570.0,622.8L570.5,599.0L571.0,623.8L571.5,599.0L572.0,622.6L572.5,595.2L573.0,623.3L573.5,599.3L574.0,621.8L574.5,601.5L575.0,621.4L575.5,603.7L576.0,622.1L576.5,600.5L577.0,626.2L577.5,604.9L578.0,624.0L578.5,597.9L579.0,624.4L579.5,601.7L580.0,621.4L580.5,599.9L581.0,625.4L581.5,601.9L582.0,622.9L582.5,600.4L583.0,623.4L583.5,600.6L584.0,623.6L584.5,602.5L585.0,621.8L585.5,600.7L586.0,621.7L586.5,603.2L587.0,622.6L587.5,603.1L588.0,630.6L588.5,604.4L589.0,620.2L589.5,601.5L590.0,620.7L590.5,601.9L591.0,623.0L591.5,600.8L592.0,622.9L592.5,600.2L593.0,624.5L593.5,603.3L594.0,623.5L594.5,603.5L595.0,621.8L595.5,602.9L596.0,619.8L596.5,603.8L597.0,622.4L597.5,603.0L598.0,619.7L598.5,602.3L599.0,622.7L599.5,602.5L600.0,622.3L600.5,602.8L601.0,622.0L601.5,601.6L602.0,622.4L602.5,601.0L603.0,623.2L603.5,601.7L604.0,620.8L604.5,603.0L605.0,621.4L605.5,604.7L606.0,621.2L606.5,603.9L607.0,620.8L607.5,603.5L608.0,621.5L608.5,602.9L609.0,620.7L609.5,604.6L610.0,622.1L610.5,604.0L611.0,621.0L611.5,602.4L612.0,620.1L612.5,598.4L613.0,625.1L613.5,605.4L614.0,621.9L614.5,602.4L615.0,623.3L615.5,603.7L616.0,626.9L616.5,602.1L617.0,621.4L617.5,602.1L618.0,621.8L618.5,602.3L619.0,623.4L619.5,602.9L620.0,619.4L620.5,601.2L621.0,624.8L621.5,603.9L622.0,619.8L622.5,600.9L623.0,620.0L623.5,606.2L624.0,622.6L624.5,603.8L625.0,622.4L625.5,600.3L626.0,626.7L626.5,604.2L627.0,620.2L627.5,602.7L628.0,623.2L628.5,602.3L629.0,623.2L629.5,602.2L630.0,623.7L630.5,603.6L631.0,625.1L631.5,602.5L632.0,623.5L632.5,599.9L633.0,621.2L633.5,600.9L634.0,623.1L634.5,602.3L635.0,624.7L635.5,598.0L636.0,622.8L636.5,601.7L637.0,624.7L637.5,599.1L638.0,621.9L638.5,601.8L639.0,627.3L639.5,599.6L640.0,622.3L640.5,600.7L641.0,626.6L641.5,603.5L642.0,622.3L642.5,598.5L643.0,627.2L643.5,601.6L644.0,627.5L644.5,597.2L645.0,622.2L645.5,604.3L646.0,623.6L646.5,603.0L647.0,622.2L647.5,600.7L648.0,626.0L648.5,602.3L649.0,626.1L649.5,598.0L650.0,622.1L650.5,599.2L651.0,621.9L651.5,599.0L652.0,630.7L652.5,602.8L653.0,626.1L653.5,601.3L654.0,623.6L654.5,600.6L655.0,625.9L655.5,601.8L656.0,623.8L656.5,604.3L657.0,622.5L657.5,602.7L658.0,619.2L658.5,604.4L659.0,620.5L659.5,597.7L660.0,619.8L660.5,605.4L661.0,622.6L661.5,605.3L662.0,620.2L662.5,595.6L663.0,623.3L663.5,604.8L664.0,621.1L664.5,604.7L665.0,622.6L665.5,602.6L666.0,622.4L666.5,602.1L667.0,622.6L667.5,605.1L668.0,623.3L668.5,605.6L669.0,623.3L669.5,602.6L670.0,620.1L670.5,604.3L671.0,619.1L671.5,602.0L672.0,621.2L672.5,602.6L673.0,620.9L673.5,606.1L674.0,621.2L674.5,603.0L675.0,618.7L675.5,604.1L676.0,622.1L676.5,605.9L677.0,622.1L677.5,604.0L678.0,620.9L678.5,603.0L679.0,620.3L679.5,604.7L680.0,620.6L680.5,604.3L681.0,623.5L681.5,604.9L682.0,625.6L682.5,601.2L683.0,620.9L683.5,600.4L684.0,626.3L684.5,598.2L685.0,624.2L685.5,602.4L686.0,625.5L686.5,600.6L687.0,623.2L687.5,600.9L688.0,622.3L688.5,601.1L689.0,622.7L689.5,604.4L690.0,624.0L690.5,603.0L691.0,623.9L691.5,602.5L692.0,623.0L692.5,604.5L693.0,622.4L693.5,602.3L694.0,627.7L694.5,597.5L695.0,629.0L695.5,594.4L696.0,625.7L696.5,598.1L697.0,626.4L697.5,598.4L698.0,622.6L698.5,599.6L699.0,626.5L699.5,599.7L700.0,623.2L700.5,599.9L701.0,623.9L701.5,600.3L702.0,622.9L702.5,604.0L703.0,620.8L703.5,600.7L704.0,621.9L704.5,600.2L705.0,626.9L705.5,597.5L706.0,625.7L706.5,600.2L707.0,626.0L707.5,601.7L708.0,624.6L708.5,600.2L709.0,628.0L709.5,598.1L710.0,627.4L710.5,602.8L711.0,626.9L711.5,597.2L712.0,624.9L712.5,600.0L713.0,626.7L713.5,602.5L714.0,626.7L714.5,601.3L715.0,622.6L715.5,602.2L716.0,623.6L716.5,604.3L717.0,619.7L717.5,602.0L718.0,623.4L718.5,602.1L719.0,623.7L719.5,604.4L720.0,619.2L720.5,601.7L721.0,624.1L721.5,603.6L722.0,621.9L722.5,601.1L723.0,622.8L723.5,603.2L724.0,624.2L724.5,603.6L725.0,621.9L725.5,602.6L726.0,623.3L726.5,604.5L727.0,623.1L727.5,605.5L728.0,619.7L728.5,604.6L729.0,619.8L729.5,603.8L730.0,623.1L730.5,601.3L731.0,622.3L731.5,605.4L732.0,625.6L732.5,605.2L733.0,621.3L733.5,602.9L734.0,620.6L734.5,604.1L735.0,622.0L735.5,605.9L736.0,620.2L736.5,602.1L737.0,622.6L737.5,604.6L738.0,622.2L738.5,603.6L739.0,619.7L739.5,599.9L740.0,619.9L740.5,606.0L741.0,619.8L741.5,602.7L742.0,622.0L742.5,603.0L743.0,618.8L743.5,606.0L744.0,621.8L744.5,598.2L745.0,622.4L745.5,605.9L746.0,622.4L746.5,602.4L747.0,619.2L747.5,604.0L748.0,625.5L748.5,604.8L749.0,623.0L749.5,605.3L750.0,620.2L750.5,603.4L751.0,619.6L751.5,602.6L752.0,625.8L752.5,603.1L753.0,619.8L753.5,603.8L754.0,620.3L754.5,602.3L755.0,622.0L755.5,605.1L756.0,620.7L756.5,597.9L757.0,626.7L757.5,604.0L758.0,623.4L758.5,601.2L759.0,621.7L759.5,601.6L760.0,621.8L760.5,604.5L761.0,624.0L761.5,601.3L762.0,622.1L762.5,600.5L763.0,624.5L763.5,598.8L764.0,621.8L764.5,603.5L765.0,622.8L765.5,605.0L766.0,627.2L766.5,601.2L767.0,622.7L767.5,604.0L768.0,623.6L768.5,604.5L769.0,620.8L769.5,605.1L770.0,623.5L770.5,600.0L771.0,620.9L771.5,602.6L772.0,624.4L772.5,601.8L773.0,621.4L773.5,604.2L774.0,623.1L774.5,601.9L775.0,620.4L775.5,604.8L776.0,619.7L776.5,604.1L777.0,623.9L777.5,605.9L778.0,620.4L778.5,603.4L779.0,622.6L779.5,603.0L780.0,622.5L780.5,605.4L781.0,619.6L781.5,604.0L782.0,621.5L782.5,603.0L783.0,623.5L783.5,603.1L784.0,622.3L784.5,604.9L785.0,626.5L785.5,604.1L786.0,622.4L786.5,605.6L787.0,623.6L787.5,603.1L788.0,619.9L788.5,605.8L789.0,621.5L789.5,605.6L790.0,620.9L790.5,605.5L791.0,623.1L791.5,604.5L792.0,623.7L792.5,604.7L793.0,624.8L793.5,603.5L794.0,623.8L794.5,606.0L795.0,622.8L795.5,604.5L796.0,621.4L796.5,596.2L797.0,624.5L797.5,601.4L798.0,623.9L798.5,600.6L799.0,625.3L799.5,601.7L800.0,621.5L800.5,598.6L801.0,622.0L801.5,599.9L802.0,622.7L802.5,601.7L803.0,623.2L803.5,602.8L804.0,621.0L804.5,599.0L805.0,623.6L805.5,602.0L806.0,623.6L806.5,601.9L807.0,620.5L807.5,601.6L808.0,625.6L808.5,601.2L809.0,620.2L809.5,601.2L810.0,621.4L810.5,600.8L811.0,626.3L811.5,601.5L812.0,623.3L812.5,604.7L813.0,630.4L813.5,600.1L814.0,629.0L814.5,602.4L815.0,623.3L815.5,601.6L816.0,624.0L816.5,601.4L817.0,621.1L817.5,600.9L818.0,624.9L818.5,602.2L819.0,622.8L819.5,601.1L820.0,626.6L820.5,597.5L821.0,625.5L821.5,600.1L822.0,626.4L822.5,594.0L823.0,624.1L823.5,603.5L824.0,626.2L824.5,602.5L825.0,623.3L825.5,600.7L826.0,625.0L826.5,604.0L827.0,622.2L827.5,602.1L828.0,626.4L828.5,599.9L829.0,627.1L829.5,601.0L830.0,622.9L830.5,598.7L831.0,621.9L831.5,596.2L832.0,622.1L832.5,598.7L833.0,622.0L833.5,594.1L834.0,626.3L834.5,601.2L835.0,627.8L835.5,595.5L836.0,621.3L836.5,599.3L837.0,625.2L837.5,602.9L838.0,623.4L838.5,602.1L839.0,622.4L839.5,603.1L840.0,624.6L840.5,603.4L841.0,622.8L841.5,603.6L842.0,622.7L842.5,602.8L843.0,623.2L843.5,596.8L844.0,622.0L844.5,597.6L845.0,621.8L845.5,603.6L846.0,622.7L846.5,601.8L847.0,622.5L847.5,603.0L848.0,625.2L848.5,601.4L849.0,621.1L849.5,601.9L850.0,622.2L850.5,600.9L851.0,627.4L851.5,601.7L852.0,625.0L852.5,602.0L853.0,627.1L853.5,598.9L854.0,626.7L854.5,599.9L855.0,622.6L855.5,599.1L856.0,621.4L856.5,601.9L857.0,630.9L857.5,602.2L858.0,625.6L858.5,601.4L859.0,623.2L859.5,598.4L860.0,624.9L860.5,598.5L861.0,624.4L861.5,601.1L862.0,622.6L862.5,604.3L863.0,622.9L863.5,602.2L864.0,622.8L864.5,600.5L865.0,620.8L865.5,600.1L866.0,625.1" fill="none" stroke="#0072bd" stroke-width="2" stroke-linejoin="round"/>
<g font-family="Liberation Sans, sans-serif" font-size="11" fill="#262626">
<text x="364" y="510.0" text-anchor="end">1.04</text>
<text x="364" y="563.0" text-anchor="end">1.02</text>
<text x="364" y="617.0" text-anchor="end">1</text>
<text x="364" y="670.0" text-anchor="end">0.98</text>
<text x="364" y="724.0" text-anchor="end">0.96</text>
<text x="370.5" y="737.0" text-anchor="middle">0</text>
<text x="439.2" y="737.0" text-anchor="middle">1000</text>
<text x="508.0" y="737.0" text-anchor="middle">2000</text>
<text x="576.8" y="737.0" text-anchor="middle">3000</text>
<text x="645.5" y="737.0" text-anchor="middle">4000</text>
<text x="714.2" y="737.0" text-anchor="middle">5000</text>
<text x="783.0" y="737.0" text-anchor="middle">6000</text>
<text x="851.8" y="737.0" text-anchor="middle">7000</text>
<text x="644.5" y="493.3" text-anchor="middle" fill="#000">boilerpressure_demo/Drum pressure constraint(Reference Tracking)</text>
<text x="644.5" y="750.8" text-anchor="middle" fill="#000">Time (seconds)</text>
<text transform="translate(337,612.5) rotate(-90)" text-anchor="middle" fill="#000">Amplitude</text>
</g>
<rect x="910.3" y="729.1" width="3.6" height="1" fill="#222"/>
<rect x="916.2" y="729.1" width="3.6" height="1" fill="#222"/>
<rect x="922.1" y="729.1" width="3.6" height="1" fill="#222"/>
<rect x="928.0" y="729.1" width="3.6" height="1" fill="#222"/>
</svg>
<svg class="abs" style="left:0;top:0" width="1001" height="788" viewBox="0 0 1001 788" font-family="Liberation Sans, sans-serif">
<text x="28.4" y="81.7" font-size="10.47" fill="#141420">Open</text>
<text x="16.1" y="96.2" font-size="10.79" fill="#141420">Session</text>
<text x="92.3" y="81.7" font-size="10.79" fill="#141420">Save</text>
<text x="78.9" y="96.2" font-size="10.79" fill="#141420">Session</text>
<text x="61.4" y="116.9" font-size="9.19" fill="#6e6e6e">FILE</text>
<text x="167.0" y="53.7" font-size="11.15" fill="#141420">New</text>
<text x="167.4" y="88.8" font-size="10.65" fill="#141420">Select</text>
<text x="225.5" y="77.6" font-size="10.84" fill="#141420">Evaluate</text>
<text x="214.4" y="91.5" font-size="10.49" fill="#141420">Requirements</text>
<text x="175.4" y="116.6" font-size="9.11" fill="#6e6e6e">REQUIREMENTS</text>
<text x="306.2" y="53.8" font-size="10.84" fill="#141420">Design Variables Set:</text>
<text x="293.5" y="88.8" font-size="10.84" fill="#141420">Uncertain Variables Set:</text>
<text x="436.2" y="53.8" font-size="11.11" fill="#141420">DesignVars</text>
<text x="436.2" y="88.8" font-size="10.29" fill="#141420">None</text>
<text x="543.1" y="77.7" font-size="10.82" fill="#141420">Sensitivity</text>
<text x="541.2" y="91.7" font-size="11.15" fill="#141420">Analysis</text>
<text x="419.0" y="116.9" font-size="9.30" fill="#6e6e6e">VARIABLES</text>
<text x="608.4" y="59.6" font-size="10.18" fill="#141420">Data to Plot:</text>
<text x="632.1" y="77.7" font-size="10.75" fill="#141420">No data selected</text>
<text x="737.2" y="80.6" font-size="10.50" fill="#7c7c7c">Add Plot</text>
<text x="792.2" y="80.6" font-size="10.22" fill="#141420">Plot Model</text>
<text x="792.2" y="94.6" font-size="10.82" fill="#141420">Response</text>
<text x="710.2" y="116.9" font-size="8.75" fill="#6e6e6e">PLOTS</text>
<text x="858.4" y="81.2" font-size="10.53" fill="#141420">Options</text>
<text x="853.9" y="116.9" font-size="9.07" fill="#6e6e6e">OPTIONS</text>
<text x="912.2" y="81.2" font-size="10.29" fill="#141420">Optimize</text>
<text x="909.1" y="116.9" font-size="8.98" fill="#6e6e6e">OPTIMIZE</text>
<text x="40.4" y="20.1" font-size="10.40" fill="#1a1a2e" textLength="126.4" lengthAdjust="spacingAndGlyphs">RESPONSE OPTIMIZATION</text>
<text x="231.1" y="19.9" font-size="10.40" fill="#f1f4f9" textLength="51.3" lengthAdjust="spacingAndGlyphs">TIME PLOT</text>
<text x="346.2" y="19.9" font-size="10.40" fill="#f1f4f9" textLength="25.6" lengthAdjust="spacingAndGlyphs">VIEW</text>
<text x="15.4" y="136.6" font-size="11.36" fill="#15152a">Data Browser</text>
<text x="14.6" y="158.7" font-size="11.33" fill="#707070">Search workspace variables</text>
<text x="29.1" y="182.8" font-size="11.74" fill="#15152a">MATLAB Workspace</text>
<text x="16.7" y="210.7" font-size="11.73" fill="#15152a">Name</text>
<text x="146.5" y="210.7" font-size="11.48" fill="#15152a">Value</text>
<text x="30.2" y="231.5" font-size="12.31" fill="#15152a">pathToLib</text>
<text x="144.3" y="231.5" font-size="11.69" fill="#15152a">'C:\Users\...</text>
<text x="29.1" y="306.4" font-size="11.78" fill="#15152a">Model Workspace (boilerpressure_demo)</text>
<text x="16.7" y="335.1" font-size="11.73" fill="#15152a">Name</text>
<text x="146.5" y="335.1" font-size="11.48" fill="#15152a">Value</text>
<text x="30.2" y="355.7" font-size="11.60" fill="#15152a" textLength="13.6" lengthAdjust="spacingAndGlyphs">Cp</text>
<text x="144.3" y="355.7" font-size="11.60" fill="#15152a" textLength="17.0" lengthAdjust="spacingAndGlyphs">452</text>
<text x="30.2" y="372.7" font-size="11.60" fill="#15152a" textLength="100.6" lengthAdjust="spacingAndGlyphs">HeatDistAmplitude</text>
<text x="144.3" y="372.7" font-size="11.60" fill="#15152a" textLength="41.3" lengthAdjust="spacingAndGlyphs">2560000</text>
<text x="30.2" y="389.7" font-size="11.60" fill="#15152a" textLength="28.6" lengthAdjust="spacingAndGlyphs">Kfout</text>
<text x="144.3" y="389.7" font-size="11.60" fill="#15152a" textLength="32.4" lengthAdjust="spacingAndGlyphs">3.3352</text>
<text x="29.1" y="428.6" font-size="11.13" fill="#15152a">Data</text>
<text x="16.7" y="457.3" font-size="11.73" fill="#15152a">Name</text>
<text x="146.5" y="457.3" font-size="11.48" fill="#15152a">Value</text>
<text x="30.2" y="477.4" font-size="11.29" fill="#15152a">DesignVars</text>
<text x="144.3" y="477.4" font-size="11.40" fill="#15152a">2x1 Contin...</text>
<text x="30.2" y="494.2" font-size="11.08" fill="#15152a">ReqValues</text>
<text x="144.3" y="494.2" font-size="11.40" fill="#15152a">3x1 struct</text>
<text x="29.1" y="549.2" font-size="11.51" fill="#15152a">Variable Preview</text>
<text x="293.5" y="138.7" font-size="11.88" fill="#15152a">Time plot 1</text>
<text x="293.5" y="455.5" font-size="12.04" fill="#15152a">Time plot 2</text>
<text x="913.0" y="428.0" font-size="10.67" fill="#9da3b4">Update block</text>
<text x="913.0" y="744.9" font-size="10.67" fill="#9da3b4">Update block</text>
</svg>
<div class="abs" id="edgeL"></div>
<div class="abs" id="edgeR2"></div>
<div class="abs" style="left:2px;top:1px;width:5px;height:92px;background:linear-gradient(90deg,#e3edf9 0,#cfe0f4 60%,#bcd3ec 100%)"></div>
<div class="abs" style="left:994px;top:1px;width:5px;height:90px;background:linear-gradient(180deg,#c4d8f0,#d3e3f6)"></div>
<div class="abs" id="edgeR"></div>
<div class="abs" id="edgeB"></div>
</div>
</body></html>
